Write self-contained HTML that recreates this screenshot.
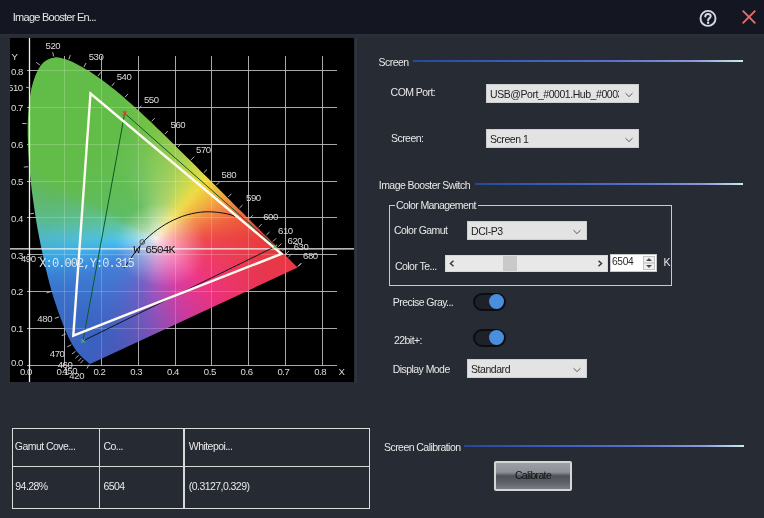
<!DOCTYPE html>
<html><head><meta charset="utf-8">
<style>
*{margin:0;padding:0;box-sizing:border-box}
html,body{width:764px;height:518px;overflow:hidden;will-change:transform;background:#272b34;font-family:"Liberation Sans",sans-serif;color:#e6e6e6}
.a{position:absolute;white-space:nowrap}
#title{position:absolute;left:0;top:0;width:764px;height:34px;background:#141722}
#strip{position:absolute;left:0;top:34px;width:764px;height:3px;background:#2a2e38}
#chart{position:absolute;left:10px;top:38px;width:344px;height:344px;background:#000;overflow:hidden}
.fill{position:absolute;left:0;top:0;width:344px;height:344px}
.fill div{position:absolute}
#chart svg{position:absolute;left:0;top:0}
.lbl{font-size:10.5px;line-height:12px;letter-spacing:-0.55px;color:#e8e8e8}
.hdr{font-size:10.5px;line-height:12px;letter-spacing:-0.55px;color:#e8e8e8}
.hline{position:absolute;height:2px;background:linear-gradient(90deg,#26489a 0%,#3a5cc0 30%,#5670cc 60%,#8a9ada 85%,#c8ecec 100%)}
.sel{position:absolute;background:#e3e3e3;border:1px solid #cfcfcf;color:#222;font-size:10.5px;line-height:12px;letter-spacing:-0.45px;overflow:hidden}
.sel span{position:absolute;left:3px;top:2.5px;white-space:nowrap}
.chev{position:absolute;width:10px;height:6px}
.grp{position:absolute;border:1px solid #c9c9c9}
.tog{position:absolute;width:33px;height:18px;border-radius:9px;background:#1e2128;border:2px solid #0b0d12}
.tog i{position:absolute;left:14px;top:-0.5px;width:15px;height:15px;border-radius:8px;background:#4a8ede}
table{position:absolute;border-collapse:collapse}
</style></head><body>
<div id="title">
 <div class="a" style="left:12.8px;top:10.9px;font-size:11px;line-height:12px;color:#e6e6e6;letter-spacing:-0.75px">Image Booster En...</div>
 <svg class="a" style="left:698px;top:9px" width="20" height="20" viewBox="0 0 20 20"><circle cx="10" cy="9.4" r="7.5" fill="none" stroke="#d2d9e6" stroke-width="1.9"/><path d="M7.3 7.5C7.3 5.8 8.6 5 10 5C11.6 5 12.7 6 12.7 7.3C12.7 9.1 10.1 9.2 10.1 11.3" fill="none" stroke="#d2d9e6" stroke-width="2" stroke-linecap="round"/><circle cx="10.1" cy="13.7" r="1.2" fill="#d2d9e6"/></svg>
 <svg class="a" style="left:741px;top:9px" width="16" height="16" viewBox="0 0 16 16"><path d="M1.7 1.7L14.3 14.3M14.3 1.7L1.7 14.3" stroke="#e86a6a" stroke-width="1.9"/></svg>
</div>
<div id="strip"></div>
<div class="a" style="left:355px;top:38px;width:1.5px;height:345px;background:#30343e"></div>
<div id="chart">
<svg width="344" height="344" viewBox="10 38 344 344"><path d="M64.5 56.0V366.0M101.5 56.0V366.0M138.5 56.0V366.0M175.5 56.0V366.0M211.5 56.0V366.0M248.5 56.0V366.0M285.5 56.0V366.0M322.5 56.0V366.0M27.0 365.5H337.0M27.0 328.5H337.0M27.0 291.5H337.0M27.0 254.5H337.0M27.0 217.5H337.0M27.0 181.5H337.0M27.0 144.5H337.0M27.0 107.5H337.0M27.0 70.5H337.0" stroke="#939393" stroke-width="1" fill="none"/></svg>
<div class="fill" style="clip-path:polygon(80.6px 325.8px,80.6px 325.8px,80.6px 325.8px,80.6px 325.7px,80.6px 325.8px,80.5px 325.8px,80.5px 325.8px,80.5px 325.8px,80.5px 325.8px,80.5px 325.8px,80.4px 325.8px,80.4px 325.8px,80.4px 325.8px,80.4px 325.8px,80.4px 325.8px,80.3px 325.8px,80.3px 325.8px,80.3px 325.8px,80.2px 325.8px,80.2px 325.8px,80.2px 325.8px,80.2px 325.8px,80.1px 325.8px,80.1px 325.8px,80.0px 325.8px,80.0px 325.8px,80.0px 325.8px,79.9px 325.8px,79.9px 325.8px,79.8px 325.8px,79.7px 325.8px,79.7px 325.8px,79.6px 325.7px,79.5px 325.7px,79.4px 325.6px,79.3px 325.5px,79.2px 325.5px,79.1px 325.4px,79.0px 325.3px,78.8px 325.2px,78.7px 325.1px,78.5px 324.9px,78.3px 324.8px,78.1px 324.6px,77.9px 324.4px,77.7px 324.2px,77.5px 324.0px,77.3px 323.8px,77.0px 323.6px,76.7px 323.3px,76.4px 323.1px,76.1px 322.8px,75.8px 322.5px,75.4px 322.2px,75.0px 321.8px,74.6px 321.5px,74.1px 321.1px,73.7px 320.6px,73.2px 320.2px,72.6px 319.7px,72.1px 319.2px,71.5px 318.6px,70.8px 318.0px,70.2px 317.4px,69.5px 316.6px,68.8px 315.8px,68.0px 315.0px,67.2px 314.0px,66.3px 312.9px,65.4px 311.5px,64.4px 310.0px,63.3px 308.3px,62.1px 306.2px,60.9px 304.0px,59.6px 301.5px,58.2px 298.7px,56.8px 295.5px,55.2px 291.9px,53.6px 287.9px,51.9px 283.5px,50.0px 278.6px,48.0px 273.1px,46.0px 267.1px,43.8px 260.6px,41.7px 253.4px,39.5px 245.6px,37.4px 237.2px,35.2px 228.1px,33.1px 218.6px,31.0px 208.4px,28.8px 197.6px,26.8px 186.4px,25.0px 175.1px,23.3px 163.6px,21.7px 151.9px,20.4px 140.1px,19.3px 128.7px,18.5px 117.5px,18.0px 106.5px,17.7px 95.8px,17.7px 85.7px,18.2px 76.0px,18.9px 66.8px,20.0px 58.2px,21.4px 50.4px,23.3px 43.5px,25.5px 37.3px,28.0px 31.9px,30.7px 27.6px,33.6px 24.3px,36.9px 21.9px,40.3px 20.4px,43.7px 19.5px,47.3px 19.3px,51.0px 19.9px,54.7px 21.0px,58.5px 22.3px,62.2px 23.8px,66.0px 25.7px,69.7px 27.7px,73.4px 29.8px,77.0px 31.9px,80.6px 34.1px,84.1px 36.4px,87.5px 38.8px,91.0px 41.2px,94.4px 43.7px,97.7px 46.3px,101.1px 48.9px,104.4px 51.6px,107.8px 54.3px,111.1px 57.1px,114.5px 60.0px,117.8px 62.9px,121.1px 65.8px,124.4px 68.8px,127.7px 71.8px,131.0px 74.8px,134.3px 77.9px,137.6px 81.0px,140.9px 84.1px,144.2px 87.3px,147.5px 90.5px,150.8px 93.6px,154.1px 96.8px,157.4px 100.1px,160.7px 103.3px,164.0px 106.5px,167.2px 109.7px,170.5px 113.0px,173.8px 116.2px,177.1px 119.4px,180.3px 122.6px,183.5px 125.8px,186.8px 129.0px,189.9px 132.2px,193.1px 135.4px,196.3px 138.5px,199.4px 141.6px,202.5px 144.7px,205.6px 147.8px,208.6px 150.8px,211.6px 153.8px,214.6px 156.8px,217.5px 159.7px,220.4px 162.6px,223.2px 165.4px,226.0px 168.2px,228.7px 170.9px,231.4px 173.5px,234.0px 176.1px,236.5px 178.7px,239.0px 181.1px,241.3px 183.4px,243.6px 185.7px,245.7px 187.9px,247.9px 190.0px,249.9px 192.0px,251.9px 194.0px,253.8px 195.9px,255.7px 197.8px,257.4px 199.5px,259.1px 201.1px,260.7px 202.7px,262.2px 204.2px,263.6px 205.6px,265.0px 207.0px,266.2px 208.3px,267.5px 209.5px,268.6px 210.6px,269.7px 211.7px,270.7px 212.7px,271.7px 213.7px,272.6px 214.6px,273.4px 215.4px,274.3px 216.2px,275.0px 217.0px,275.8px 217.7px,276.4px 218.4px,277.1px 219.1px,277.7px 219.7px,278.3px 220.3px,278.9px 220.9px,279.5px 221.4px,280.0px 222.0px,280.5px 222.5px,281.0px 222.9px,281.4px 223.4px,281.8px 223.8px,282.2px 224.2px,282.6px 224.6px,283.0px 224.9px,283.3px 225.2px,283.6px 225.6px,283.9px 225.8px,284.2px 226.1px,284.4px 226.4px,284.6px 226.6px,284.9px 226.8px,285.1px 227.0px,285.3px 227.2px,285.4px 227.4px,285.6px 227.5px,285.8px 227.7px,285.9px 227.8px,286.0px 228.0px,286.1px 228.1px,286.2px 228.2px,286.3px 228.2px,286.4px 228.3px,286.5px 228.4px,286.6px 228.5px,286.6px 228.6px,286.7px 228.6px,286.8px 228.7px,286.8px 228.8px,286.9px 228.8px,287.0px 228.9px,287.0px 229.0px,287.1px 229.0px,287.1px 229.1px,287.2px 229.2px,287.3px 229.2px,287.3px 229.3px,287.4px 229.3px,287.4px 229.4px,287.4px 229.4px,287.5px 229.4px,287.5px 229.5px,287.5px 229.5px,287.6px 229.5px,287.6px 229.5px,287.6px 229.5px,287.6px 229.5px,287.6px 229.6px,287.6px 229.6px,287.6px 229.6px)">
<div style="left:44px;top:18px;width:7px;height:2px;background:linear-gradient(90deg,#62bc48 0px,#62bc48 6px,#62bc48 7px)"></div>
<div style="left:35px;top:20px;width:23px;height:2px;background:linear-gradient(90deg,#62bc48 0px,#62bc48 6px,#62bc48 12px,#62bc48 18px,#62bc48 23px)"></div>
<div style="left:32px;top:22px;width:32px;height:2px;background:linear-gradient(90deg,#62bc48 0px,#62bc48 6px,#62bc48 12px,#62bc48 18px,#62bc48 24px,#62bc48 30px,#62bc48 32px)"></div>
<div style="left:29px;top:24px;width:39px;height:2px;background:linear-gradient(90deg,#62bc48 0px,#62bc48 6px,#62bc48 12px,#62bc48 18px,#62bc48 24px,#62bc48 30px,#62bc48 36px,#62bc48 39px)"></div>
<div style="left:28px;top:26px;width:44px;height:2px;background:linear-gradient(90deg,#62bc48 0px,#62bc48 6px,#62bc48 12px,#62bc48 18px,#62bc48 24px,#62bc48 30px,#62bc48 36px,#62bc48 42px,#62bc48 44px)"></div>
<div style="left:26px;top:28px;width:49px;height:2px;background:linear-gradient(90deg,#62bc48 0px,#62bc48 6px,#62bc48 12px,#62bc48 18px,#62bc48 24px,#62bc48 30px,#62bc48 36px,#62bc48 42px,#62bc48 48px,#62bc48 49px)"></div>
<div style="left:25px;top:30px;width:54px;height:2px;background:linear-gradient(90deg,#62bc48 0px,#62bc48 6px,#62bc48 12px,#62bc48 18px,#62bc48 24px,#62bc48 30px,#62bc48 36px,#62bc48 42px,#62bc48 48px,#62bc48 54px)"></div>
<div style="left:24px;top:32px;width:58px;height:2px;background:linear-gradient(90deg,#62bc48 0px,#62bc48 6px,#62bc48 12px,#62bc48 18px,#62bc48 24px,#62bc48 30px,#62bc48 36px,#62bc48 42px,#62bc48 48px,#62bc48 54px,#62bc48 58px)"></div>
<div style="left:23px;top:34px;width:62px;height:2px;background:linear-gradient(90deg,#62bc48 0px,#62bc48 6px,#62bc48 12px,#62bc48 18px,#62bc48 24px,#62bc48 30px,#62bc48 36px,#62bc48 42px,#62bc48 48px,#62bc48 54px,#62bc48 60px,#62bc48 62px)"></div>
<div style="left:22px;top:36px;width:66px;height:2px;background:linear-gradient(90deg,#62bc48 0px,#62bc48 6px,#62bc48 12px,#62bc48 18px,#62bc48 24px,#62bc48 30px,#62bc48 36px,#62bc48 42px,#62bc48 48px,#62bc48 54px,#62bc48 60px,#62bc48 66px)"></div>
<div style="left:21px;top:38px;width:70px;height:2px;background:linear-gradient(90deg,#62bc48 0px,#62bc48 6px,#62bc48 12px,#62bc48 18px,#62bc48 24px,#62bc48 30px,#62bc48 36px,#62bc48 42px,#62bc48 48px,#62bc48 54px,#62bc48 60px,#62bc48 66px,#62bc48 70px)"></div>
<div style="left:21px;top:40px;width:73px;height:2px;background:linear-gradient(90deg,#62bc48 0px,#62bc48 6px,#62bc48 12px,#62bc48 18px,#62bc48 24px,#62bc48 30px,#62bc48 36px,#62bc48 42px,#62bc48 48px,#62bc48 54px,#62bc48 60px,#62bc48 66px,#62bc48 72px,#62bc48 73px)"></div>
<div style="left:20px;top:42px;width:77px;height:2px;background:linear-gradient(90deg,#62bc48 0px,#62bc48 6px,#62bc48 12px,#62bc48 18px,#62bc48 24px,#62bc48 30px,#62bc48 36px,#62bc48 42px,#62bc48 48px,#62bc48 54px,#62bc48 60px,#62bc48 66px,#62bc48 72px,#62bc48 77px)"></div>
<div style="left:19px;top:44px;width:81px;height:2px;background:linear-gradient(90deg,#62bc48 0px,#62bc48 6px,#62bc48 12px,#62bc48 18px,#62bc48 24px,#62bc48 30px,#62bc48 36px,#62bc48 42px,#62bc48 48px,#62bc48 54px,#62bc48 60px,#62bc48 66px,#62bc48 72px,#62bc48 78px,#62bc48 81px)"></div>
<div style="left:19px;top:46px;width:83px;height:2px;background:linear-gradient(90deg,#62bc48 0px,#62bc48 6px,#62bc48 12px,#62bc48 18px,#62bc48 24px,#62bc48 30px,#62bc48 36px,#62bc48 42px,#62bc48 48px,#62bc48 54px,#62bc48 60px,#62bc48 66px,#62bc48 72px,#62bc48 78px,#62bc48 83px)"></div>
<div style="left:18px;top:48px;width:87px;height:2px;background:linear-gradient(90deg,#62bc48 0px,#62bc48 6px,#62bc48 12px,#62bc48 18px,#62bc48 24px,#62bc48 30px,#62bc48 36px,#62bc48 42px,#62bc48 48px,#62bc48 54px,#62bc48 60px,#62bc48 66px,#62bc48 72px,#62bc48 78px,#62bc48 84px,#62bc48 87px)"></div>
<div style="left:18px;top:50px;width:89px;height:2px;background:linear-gradient(90deg,#62bc48 0px,#62bc48 6px,#62bc48 12px,#62bc48 18px,#62bc48 24px,#62bc48 30px,#62bc48 36px,#62bc48 42px,#62bc48 48px,#62bc48 54px,#62bc48 60px,#62bc48 66px,#62bc48 72px,#62bc48 78px,#62bc48 84px,#62bc48 89px)"></div>
<div style="left:17px;top:52px;width:93px;height:2px;background:linear-gradient(90deg,#62bc48 0px,#62bc48 6px,#62bc48 12px,#62bc48 18px,#62bc48 24px,#62bc48 30px,#62bc48 36px,#62bc48 42px,#62bc48 48px,#62bc48 54px,#62bc48 60px,#62bc48 66px,#62bc48 72px,#62bc48 78px,#62bc48 84px,#62bc48 90px,#64bd48 93px)"></div>
<div style="left:17px;top:54px;width:95px;height:2px;background:linear-gradient(90deg,#62bc48 0px,#62bc48 6px,#62bc48 12px,#62bc48 18px,#62bc48 24px,#62bc48 30px,#62bc48 36px,#62bc48 42px,#62bc48 48px,#62bc48 54px,#62bc48 60px,#62bc48 66px,#62bc48 72px,#62bc48 78px,#62bc48 84px,#62bc48 90px,#65bd48 95px)"></div>
<div style="left:17px;top:56px;width:97px;height:2px;background:linear-gradient(90deg,#62bc48 0px,#62bc48 6px,#62bc48 12px,#62bc48 18px,#62bc48 24px,#62bc48 30px,#62bc48 36px,#62bc48 42px,#62bc48 48px,#62bc48 54px,#62bc48 60px,#62bc48 66px,#62bc48 72px,#62bc48 78px,#62bc48 84px,#62bc48 90px,#65bd48 96px,#66bd48 97px)"></div>
<div style="left:16px;top:58px;width:101px;height:2px;background:linear-gradient(90deg,#62bc48 0px,#62bc48 6px,#62bc48 12px,#62bc48 18px,#62bc48 24px,#62bc48 30px,#62bc48 36px,#62bc48 42px,#62bc48 48px,#62bc48 54px,#62bc48 60px,#62bc48 66px,#62bc48 72px,#62bc48 78px,#62bc48 84px,#62bc48 90px,#64bd48 96px,#68be48 101px)"></div>
<div style="left:16px;top:60px;width:103px;height:2px;background:linear-gradient(90deg,#62bc48 0px,#62bc48 6px,#62bc48 12px,#62bc48 18px,#62bc48 24px,#62bc48 30px,#62bc48 36px,#62bc48 42px,#62bc48 48px,#62bc48 54px,#62bc48 60px,#62bc48 66px,#62bc48 72px,#62bc48 78px,#62bc48 84px,#62bc48 90px,#64bd48 96px,#68be48 102px,#69be47 103px)"></div>
<div style="left:16px;top:62px;width:105px;height:2px;background:linear-gradient(90deg,#62bc48 0px,#62bc48 6px,#62bc48 12px,#62bc48 18px,#62bc48 24px,#62bc48 30px,#62bc48 36px,#62bc48 42px,#62bc48 48px,#62bc48 54px,#62bc48 60px,#62bc48 66px,#62bc48 72px,#62bc48 78px,#62bc48 84px,#62bc48 90px,#64bd48 96px,#68be48 102px,#6abe47 105px)"></div>
<div style="left:16px;top:64px;width:108px;height:2px;background:linear-gradient(90deg,#62bc48 0px,#62bc48 6px,#62bc48 12px,#62bc48 18px,#62bc48 24px,#62bc48 30px,#62bc48 36px,#62bc48 42px,#62bc48 48px,#62bc48 54px,#62bc48 60px,#62bc48 66px,#62bc48 72px,#62bc48 78px,#62bc48 84px,#62bc48 90px,#63bc48 96px,#67be48 102px,#6cbf47 108px)"></div>
<div style="left:15px;top:66px;width:111px;height:2px;background:linear-gradient(90deg,#62bc48 0px,#62bc48 6px,#62bc48 12px,#62bc48 18px,#62bc48 24px,#62bc48 30px,#62bc48 36px,#62bc48 42px,#62bc48 48px,#62bc48 54px,#62bc48 60px,#62bc48 66px,#62bc48 72px,#62bc48 78px,#62bc48 84px,#62bc48 90px,#62bc48 96px,#66bd48 102px,#6bbf47 108px,#6dbf47 111px)"></div>
<div style="left:15px;top:68px;width:113px;height:2px;background:linear-gradient(90deg,#62bc48 0px,#62bc48 6px,#62bc48 12px,#62bc48 18px,#62bc48 24px,#62bc48 30px,#62bc48 36px,#62bc48 42px,#62bc48 48px,#62bc48 54px,#62bc48 60px,#62bc48 66px,#62bc48 72px,#62bc48 78px,#62bc48 84px,#62bc48 90px,#62bc48 96px,#66bd48 102px,#6bbf47 108px,#6ec047 113px)"></div>
<div style="left:15px;top:70px;width:115px;height:2px;background:linear-gradient(90deg,#62bc48 0px,#62bc48 6px,#62bc48 12px,#62bc48 18px,#62bc48 24px,#62bc48 30px,#62bc48 36px,#62bc48 42px,#62bc48 48px,#62bc48 54px,#62bc48 60px,#62bc48 66px,#62bc48 72px,#62bc48 78px,#62bc48 84px,#62bc48 90px,#62bc48 96px,#66bd48 102px,#6abf47 108px,#6fc047 114px,#70c047 115px)"></div>
<div style="left:15px;top:72px;width:117px;height:2px;background:linear-gradient(90deg,#62bc48 0px,#62bc48 6px,#62bc48 12px,#62bc48 18px,#62bc48 24px,#62bc48 30px,#62bc48 36px,#62bc48 42px,#62bc48 48px,#62bc48 54px,#62bc48 60px,#62bc48 66px,#62bc48 72px,#62bc48 78px,#62bc48 84px,#62bc48 90px,#62bc48 96px,#65bd48 102px,#6abe47 108px,#6fc047 114px,#71c147 117px)"></div>
<div style="left:15px;top:74px;width:120px;height:2px;background:linear-gradient(90deg,#62bc48 0px,#62bc48 6px,#62bc48 12px,#62bc48 18px,#62bc48 24px,#62bc48 30px,#62bc48 36px,#62bc48 42px,#62bc48 48px,#62bc48 54px,#62bc48 60px,#62bc48 66px,#62bc48 72px,#62bc48 78px,#62bc48 84px,#62bc48 90px,#62bc48 96px,#65bd48 102px,#6abe47 108px,#6ec047 114px,#73c147 120px)"></div>
<div style="left:15px;top:76px;width:122px;height:2px;background:linear-gradient(90deg,#62bc48 0px,#62bc48 6px,#62bc48 12px,#62bc48 18px,#62bc48 24px,#62bc48 30px,#62bc48 36px,#62bc48 42px,#62bc48 48px,#62bc48 54px,#62bc48 60px,#62bc48 66px,#62bc48 72px,#62bc48 78px,#62bc48 84px,#62bc48 90px,#62bc48 96px,#65bd48 102px,#69be47 108px,#6ec047 114px,#73c147 120px,#75c247 122px)"></div>
<div style="left:15px;top:78px;width:124px;height:2px;background:linear-gradient(90deg,#62bc48 0px,#62bc48 6px,#62bc48 12px,#62bc48 18px,#62bc48 24px,#62bc48 30px,#62bc48 36px,#62bc48 42px,#62bc48 48px,#62bc48 54px,#62bc48 60px,#62bc48 66px,#62bc48 72px,#62bc48 78px,#62bc48 84px,#62bc48 90px,#62bc48 96px,#64bd48 102px,#69be47 108px,#6ec047 114px,#73c147 120px,#76c246 124px)"></div>
<div style="left:14px;top:80px;width:127px;height:2px;background:linear-gradient(90deg,#62bc48 0px,#62bc48 6px,#62bc48 12px,#62bc48 18px,#62bc48 24px,#62bc48 30px,#62bc48 36px,#62bc48 42px,#62bc48 48px,#62bc48 54px,#62bc48 60px,#62bc48 66px,#62bc48 72px,#62bc48 78px,#62bc48 84px,#62bc48 90px,#62bc48 96px,#63bc48 102px,#68be48 108px,#6dbf47 114px,#72c147 120px,#77c246 126px,#78c346 127px)"></div>
<div style="left:14px;top:82px;width:129px;height:2px;background:linear-gradient(90deg,#62bc48 0px,#62bc48 6px,#62bc48 12px,#62bc48 18px,#62bc48 24px,#62bc48 30px,#62bc48 36px,#62bc48 42px,#62bc48 48px,#62bc48 54px,#62bc48 60px,#62bc48 66px,#62bc48 72px,#62bc48 78px,#62bc48 84px,#62bc48 90px,#62bc48 96px,#63bc48 102px,#68be48 108px,#6dbf47 114px,#72c147 120px,#77c246 126px,#79c346 129px)"></div>
<div style="left:14px;top:84px;width:131px;height:2px;background:linear-gradient(90deg,#62bc48 0px,#62bc48 6px,#62bc48 12px,#62bc48 18px,#62bc48 24px,#62bc48 30px,#62bc48 36px,#62bc48 42px,#62bc48 48px,#62bc48 54px,#62bc48 60px,#62bc48 66px,#62bc48 72px,#62bc48 78px,#62bc48 84px,#62bc48 90px,#62bc48 96px,#62bc48 102px,#67be48 108px,#6cbf47 114px,#71c147 120px,#77c246 126px,#7bc446 131px)"></div>
<div style="left:14px;top:86px;width:133px;height:2px;background:linear-gradient(90deg,#62bc48 0px,#62bc48 6px,#62bc48 12px,#62bc48 18px,#62bc48 24px,#62bc48 30px,#62bc48 36px,#62bc48 42px,#62bc48 48px,#62bc48 54px,#62bc48 60px,#62bc48 66px,#62bc48 72px,#62bc48 78px,#62bc48 84px,#62bc48 90px,#62bc48 96px,#62bc48 102px,#67be48 108px,#6cbf47 114px,#71c147 120px,#76c246 126px,#7cc446 132px,#7dc446 133px)"></div>
<div style="left:14px;top:88px;width:135px;height:2px;background:linear-gradient(90deg,#62bc48 0px,#62bc48 6px,#62bc48 12px,#62bc48 18px,#62bc48 24px,#62bc48 30px,#62bc48 36px,#62bc48 42px,#62bc48 48px,#62bc48 54px,#62bc48 60px,#62bc48 66px,#62bc48 72px,#62bc48 78px,#62bc48 84px,#62bc48 90px,#62bc48 96px,#62bc48 102px,#67bd48 108px,#6cbf47 114px,#71c147 120px,#76c246 126px,#7cc446 132px,#7fc445 135px)"></div>
<div style="left:14px;top:90px;width:138px;height:2px;background:linear-gradient(90deg,#62bc48 0px,#62bc48 6px,#62bc48 12px,#62bc48 18px,#62bc48 24px,#62bc48 30px,#62bc48 36px,#62bc48 42px,#62bc48 48px,#62bc48 54px,#62bc48 60px,#62bc48 66px,#62bc48 72px,#62bc48 78px,#62bc48 84px,#62bc48 90px,#62bc48 96px,#62bc48 102px,#66bd48 108px,#6cbf47 114px,#71c147 120px,#77c247 126px,#7cc447 132px,#82c546 138px)"></div>
<div style="left:14px;top:92px;width:140px;height:2px;background:linear-gradient(90deg,#62bc48 0px,#62bc48 6px,#62bc48 12px,#62bc48 18px,#62bc48 24px,#62bc48 30px,#62bc48 36px,#62bc48 42px,#62bc48 48px,#62bc48 54px,#62bc48 60px,#62bc48 66px,#62bc48 72px,#62bc48 78px,#62bc48 84px,#62bc48 90px,#62bc48 96px,#62bc48 102px,#66bd48 108px,#6cbf48 114px,#72c148 120px,#77c348 126px,#7dc448 132px,#83c547 138px,#85c646 140px)"></div>
<div style="left:14px;top:94px;width:142px;height:2px;background:linear-gradient(90deg,#62bc48 0px,#62bc48 6px,#62bc48 12px,#62bc48 18px,#62bc48 24px,#62bc48 30px,#62bc48 36px,#62bc48 42px,#62bc48 48px,#62bc48 54px,#62bc48 60px,#62bc48 66px,#62bc48 72px,#62bc48 78px,#62bc48 84px,#62bc48 90px,#62bc48 96px,#62bc49 102px,#66bd49 108px,#6cbf49 114px,#72c149 120px,#78c349 126px,#7ec549 132px,#84c648 138px,#88c647 142px)"></div>
<div style="left:14px;top:96px;width:144px;height:2px;background:linear-gradient(90deg,#62bc48 0px,#62bc48 6px,#62bc48 12px,#62bc48 18px,#62bc48 24px,#62bc48 30px,#62bc48 36px,#62bc48 42px,#62bc48 48px,#62bc48 54px,#62bc48 60px,#62bc48 66px,#62bc48 72px,#62bc48 78px,#62bc48 84px,#62bc48 90px,#62bc49 96px,#63bc4a 102px,#67be4a 108px,#6dbf4a 114px,#73c14a 120px,#78c34a 126px,#7ec54a 132px,#84c649 138px,#8ac747 144px)"></div>
<div style="left:14px;top:98px;width:146px;height:2px;background:linear-gradient(90deg,#62bc48 0px,#62bc48 6px,#62bc48 12px,#62bc48 18px,#62bc48 24px,#62bc48 30px,#62bc48 36px,#62bc48 42px,#62bc48 48px,#62bc48 54px,#62bc48 60px,#62bc48 66px,#62bc48 72px,#62bc48 78px,#62bc48 84px,#62bc48 90px,#63bc49 96px,#64bd4a 102px,#67be4b 108px,#6dc04b 114px,#73c24b 120px,#79c34b 126px,#7fc54b 132px,#85c64a 138px,#8bc748 144px,#8dc748 146px)"></div>
<div style="left:14px;top:100px;width:148px;height:2px;background:linear-gradient(90deg,#62bc48 0px,#62bc48 6px,#62bc48 12px,#62bc48 18px,#62bc48 24px,#62bc48 30px,#62bc48 36px,#62bc48 42px,#62bc48 48px,#62bc48 54px,#62bc48 60px,#62bc48 66px,#62bc48 72px,#62bc48 78px,#62bc48 84px,#62bc49 90px,#63bc4a 96px,#64bd4b 102px,#67be4c 108px,#6dc04c 114px,#73c24c 120px,#7ac44c 126px,#80c64c 132px,#86c74b 138px,#8cc749 144px,#90c848 148px)"></div>
<div style="left:14px;top:102px;width:150px;height:2px;background:linear-gradient(90deg,#62bc48 0px,#62bc48 6px,#62bc48 12px,#62bc48 18px,#62bc48 24px,#62bc48 30px,#62bc48 36px,#62bc48 42px,#62bc48 48px,#62bc48 54px,#62bc48 60px,#62bc48 66px,#62bc48 72px,#62bc48 78px,#62bc49 84px,#63bc4a 90px,#64bd4b 96px,#64bd4c 102px,#67be4d 108px,#6dc04d 114px,#74c24e 120px,#7ac44d 126px,#80c64d 132px,#87c74c 138px,#8dc84a 144px,#93c949 150px)"></div>
<div style="left:14px;top:104px;width:152px;height:2px;background:linear-gradient(90deg,#62bc48 0px,#62bc48 6px,#62bc48 12px,#62bc48 18px,#62bc48 24px,#62bc48 30px,#62bc48 36px,#62bc48 42px,#62bc48 48px,#62bc48 54px,#62bc48 60px,#62bc48 66px,#62bc48 72px,#62bc48 78px,#62bc49 84px,#63bc4a 90px,#64bd4c 96px,#65bd4d 102px,#67be4e 108px,#6ec04e 114px,#74c24f 120px,#7bc44e 126px,#81c64e 132px,#88c74d 138px,#8ec84b 144px,#94c94a 150px,#96c949 152px)"></div>
<div style="left:14px;top:106px;width:154px;height:2px;background:linear-gradient(90deg,#62bc48 0px,#62bc48 6px,#62bc48 12px,#62bc48 18px,#62bc48 24px,#62bc48 30px,#62bc48 36px,#62bc48 42px,#62bc48 48px,#62bc48 54px,#62bc48 60px,#62bc48 66px,#62bc48 72px,#62bc49 78px,#62bc4a 84px,#63bd4b 90px,#64bd4c 96px,#65bd4e 102px,#67be4f 108px,#6ec04f 114px,#75c250 120px,#7bc44f 126px,#82c74f 132px,#88c84e 138px,#8fc84d 144px,#95c94b 150px,#99ca4a 154px)"></div>
<div style="left:15px;top:108px;width:155px;height:2px;background:linear-gradient(90deg,#62bc48 0px,#62bc48 6px,#62bc48 12px,#62bc48 18px,#62bc48 24px,#62bc48 30px,#62bc48 36px,#62bc48 42px,#62bc48 48px,#62bc48 54px,#62bc48 60px,#62bc48 66px,#62bc49 72px,#62bc49 78px,#63bc4a 84px,#63bd4c 90px,#65bd4d 96px,#66be4f 102px,#69be50 108px,#6fc150 114px,#76c351 120px,#7dc550 126px,#84c750 132px,#8ac84f 138px,#91c94d 144px,#97ca4c 150px,#9cca4a 155px)"></div>
<div style="left:15px;top:110px;width:157px;height:2px;background:linear-gradient(90deg,#62bc48 0px,#62bc48 6px,#62bc48 12px,#62bc48 18px,#62bc48 24px,#62bc48 30px,#62bc48 36px,#62bc48 42px,#62bc48 48px,#62bc48 54px,#62bc48 60px,#62bc48 66px,#62bc49 72px,#62bc4a 78px,#63bc4b 84px,#64bd4c 90px,#65bd4e 96px,#66be4f 102px,#69be51 108px,#70c151 114px,#76c352 120px,#7dc551 126px,#84c751 132px,#8bc850 138px,#92c94e 144px,#98ca4d 150px,#9fcb4a 156px,#a1cc4a 157px)"></div>
<div style="left:15px;top:112px;width:159px;height:2px;background:linear-gradient(90deg,#62bc48 0px,#62bc48 6px,#62bc48 12px,#62bc48 18px,#62bc48 24px,#62bc48 30px,#62bc48 36px,#62bc48 42px,#62bc48 48px,#62bc48 54px,#62bc48 60px,#62bc49 66px,#62bc49 72px,#62bc4a 78px,#63bc4b 84px,#64bd4d 90px,#65bd4e 96px,#67be50 102px,#69bf52 108px,#70c152 114px,#77c353 120px,#7ec553 126px,#85c852 132px,#8cc951 138px,#93ca4f 144px,#99ca4e 150px,#a0cc4b 156px,#a6cd49 159px)"></div>
<div style="left:15px;top:114px;width:161px;height:2px;background:linear-gradient(90deg,#62bc48 0px,#62bc48 6px,#62bc48 12px,#62bc48 18px,#62bc48 24px,#62bc48 30px,#62bc48 36px,#62bc48 42px,#62bc48 48px,#62bc48 54px,#62bc48 60px,#62bc49 66px,#62bc4a 72px,#62bc4b 78px,#63bc4c 84px,#64bd4d 90px,#65bd4f 96px,#67be51 102px,#69bf53 108px,#70c153 114px,#77c354 120px,#7ec654 126px,#86c853 132px,#8dc952 138px,#94ca50 144px,#9acb4f 150px,#a2cc4c 156px,#abcf49 161px)"></div>
<div style="left:15px;top:116px;width:163px;height:2px;background:linear-gradient(90deg,#62bc48 0px,#62bc48 6px,#62bc48 12px,#62bc48 18px,#62bc48 24px,#62bc48 30px,#62bc48 36px,#62bc48 42px,#62bc48 48px,#62bc48 54px,#62bc48 60px,#62bc4a 66px,#62bc4a 72px,#62bc4b 78px,#62bc4c 84px,#64bd4d 90px,#65bd4f 96px,#67be52 102px,#6abf54 108px,#70c154 114px,#78c455 120px,#7fc655 126px,#86c854 132px,#8ec953 138px,#95ca51 144px,#9bcb50 150px,#a4cd4d 156px,#aed049 162px,#b0d048 163px)"></div>
<div style="left:15px;top:118px;width:165px;height:2px;background:linear-gradient(90deg,#62bc48 0px,#62bc48 6px,#62bc48 12px,#62bc48 18px,#62bc48 24px,#62bc48 30px,#62bc48 36px,#62bc48 42px,#62bc48 48px,#62bc48 54px,#62bc49 60px,#62bc4a 66px,#62bc4b 72px,#62bc4c 78px,#62bc4c 84px,#64bd4e 90px,#65be50 96px,#68be52 102px,#6abf55 108px,#70c155 114px,#78c456 120px,#80c656 126px,#87c955 132px,#8fca54 138px,#96cb53 144px,#9dcc51 150px,#a5cd4e 156px,#b0d04a 162px,#b5d248 165px)"></div>
<div style="left:15px;top:120px;width:167px;height:2px;background:linear-gradient(90deg,#62bc48 0px,#62bc48 6px,#62bc48 12px,#62bc48 18px,#62bc48 24px,#62bc48 30px,#62bc48 36px,#62bc48 42px,#62bc48 48px,#62bc48 54px,#62bc49 60px,#62bc4b 66px,#62bc4b 72px,#62bc4c 78px,#62bc4d 84px,#64bd4e 90px,#65be50 96px,#68be53 102px,#6abf55 108px,#70c156 114px,#78c457 120px,#80c657 126px,#88c956 132px,#8fca55 138px,#97cb54 144px,#9ecc52 150px,#a7ce4f 156px,#b2d14a 162px,#bad347 167px)"></div>
<div style="left:15px;top:122px;width:169px;height:2px;background:linear-gradient(90deg,#62bc48 0px,#62bc48 6px,#62bc48 12px,#62bc48 18px,#62bc48 24px,#62bc48 30px,#62bc48 36px,#62bc48 42px,#62bc48 48px,#62bc49 54px,#62bc4a 60px,#62bc4b 66px,#62bc4c 72px,#62bc4d 78px,#62bc4d 84px,#63bd4e 90px,#65be51 96px,#68be53 102px,#6bbf56 108px,#70c157 114px,#78c458 120px,#81c758 126px,#89c957 132px,#90ca56 138px,#98cb55 144px,#9fcc53 150px,#a9cf4f 156px,#b3d24b 162px,#bed447 168px,#bfd546 169px)"></div>
<div style="left:16px;top:124px;width:170px;height:2px;background:linear-gradient(90deg,#62bc48 0px,#62bc48 6px,#62bc48 12px,#62bc48 18px,#62bc48 24px,#62bc48 30px,#62bc48 36px,#62bc48 42px,#62bc48 48px,#62bc49 54px,#62bc4b 60px,#62bc4c 66px,#62bc4d 72px,#62bc4d 78px,#62bd4e 84px,#64bd4f 90px,#66be51 96px,#68bf54 102px,#6bc057 108px,#72c259 114px,#7ac559 120px,#82c759 126px,#8bca58 132px,#92cb57 138px,#9acc55 144px,#a1cd54 150px,#acd04f 156px,#b7d34b 162px,#c1d646 168px,#c5d645 170px)"></div>
<div style="left:16px;top:126px;width:172px;height:2px;background:linear-gradient(90deg,#62bc4a 0px,#62bc48 6px,#62bc48 12px,#62bc48 18px,#62bc48 24px,#62bc48 30px,#62bc48 36px,#62bc48 42px,#62bc48 48px,#62bc4a 54px,#62bc4b 60px,#62bc4c 66px,#62bc4d 72px,#62bc4e 78px,#62bd4e 84px,#63bd4f 90px,#66be52 96px,#68bf55 102px,#6cc058 108px,#72c25a 114px,#7ac55a 120px,#83c85a 126px,#8bca59 132px,#93cb58 138px,#9bcc56 144px,#a3cd55 150px,#aed050 156px,#b9d34b 162px,#c4d647 168px,#cbd744 172px)"></div>
<div style="left:16px;top:128px;width:174px;height:2px;background:linear-gradient(90deg,#62bb4c 0px,#62bc49 6px,#62bc48 12px,#62bc48 18px,#62bc48 24px,#62bc48 30px,#62bc48 36px,#62bc48 42px,#62bc49 48px,#62bc4a 54px,#62bc4c 60px,#62bc4d 66px,#62bc4e 72px,#62bc4e 78px,#62bd4f 84px,#63bd4f 90px,#65be52 96px,#68bf55 102px,#6cc058 108px,#72c25a 114px,#7bc55b 120px,#83c85b 126px,#8cca5a 132px,#94cb59 138px,#9ccd58 144px,#a4ce55 150px,#b0d150 156px,#bbd44c 162px,#c6d747 168px,#d1d842 174px)"></div>
<div style="left:16px;top:130px;width:176px;height:2px;background:linear-gradient(90deg,#62bb4f 0px,#62bc4b 6px,#62bc48 12px,#62bc48 18px,#62bc48 24px,#62bc48 30px,#62bc48 36px,#62bc48 42px,#62bc49 48px,#62bc4b 54px,#62bc4c 60px,#62bc4d 66px,#62bc4e 72px,#62bc4f 78px,#62bd4f 84px,#63bd50 90px,#65be52 96px,#68bf55 102px,#6cc059 108px,#72c25b 114px,#7bc55c 120px,#84c85c 126px,#8dcb5b 132px,#95cc5a 138px,#9dcd59 144px,#a6ce56 150px,#b2d251 156px,#bdd54c 162px,#c8d747 168px,#d4d942 174px,#d7d941 176px)"></div>
<div style="left:16px;top:132px;width:178px;height:2px;background:linear-gradient(90deg,#61bb51 0px,#62bb4d 6px,#62bc49 12px,#62bc48 18px,#62bc48 24px,#62bc48 30px,#62bc48 36px,#62bc48 42px,#62bc4a 48px,#62bc4b 54px,#62bc4d 60px,#62bc4e 66px,#62bc4f 72px,#62bc50 78px,#62bd50 84px,#63bd50 90px,#65be52 96px,#68bf56 102px,#6cc05a 108px,#72c25c 114px,#7bc55d 120px,#84c85d 126px,#8ecb5c 132px,#96cc5b 138px,#9fcd5a 144px,#a8cf57 150px,#b4d252 156px,#c0d54c 162px,#cbd847 168px,#d6d942 174px,#ddda3f 178px)"></div>
<div style="left:16px;top:134px;width:180px;height:2px;background:linear-gradient(90deg,#61bb53 0px,#62bb50 6px,#62bc4c 12px,#62bc48 18px,#62bc48 24px,#62bc48 30px,#62bc48 36px,#62bc48 42px,#62bc4a 48px,#62bc4c 54px,#62bc4d 60px,#62bc4f 66px,#62bc50 72px,#62bc50 78px,#62bd51 84px,#63bd51 90px,#65bd53 96px,#68bf56 102px,#6cc05a 108px,#72c25d 114px,#7bc55e 120px,#85c85e 126px,#8ecb5d 132px,#97cc5c 138px,#a0ce5b 144px,#aad058 150px,#b6d352 156px,#c2d64d 162px,#ced848 168px,#d9da42 174px,#e4db3e 180px)"></div>
<div style="left:17px;top:136px;width:181px;height:2px;background:linear-gradient(90deg,#61ba55 0px,#61bb51 6px,#62bb4e 12px,#62bc49 18px,#62bc48 24px,#62bc48 30px,#62bc48 36px,#62bc49 42px,#62bc4b 48px,#61bc4d 54px,#61bc4e 60px,#61bc4f 66px,#62bc50 72px,#62bd51 78px,#62bd51 84px,#63bd51 90px,#65be53 96px,#69bf57 102px,#6dc05b 108px,#73c25f 114px,#7dc65f 120px,#87c95f 126px,#91cc5e 132px,#9acd5d 138px,#a2ce5c 144px,#aed157 150px,#bad452 156px,#c6d74c 162px,#d2d947 168px,#deda42 174px,#e8db3d 180px,#eadc3c 181px)"></div>
<div style="left:17px;top:138px;width:183px;height:2px;background:linear-gradient(90deg,#61ba57 0px,#61bb54 6px,#62bb50 12px,#62bc4c 18px,#62bc48 24px,#62bc48 30px,#62bc48 36px,#62bc4a 42px,#62bc4c 48px,#61bc4d 54px,#61bc4f 60px,#61bc50 66px,#61bc51 72px,#62bd52 78px,#62bd52 84px,#63bd52 90px,#64bd53 96px,#68bf57 102px,#6dc05c 108px,#73c25f 114px,#7dc660 120px,#87c960 126px,#91cc5f 132px,#9bcd5e 138px,#a4cf5d 144px,#b0d258 150px,#bdd552 156px,#c9d84c 162px,#d5d947 168px,#e1db41 174px,#ebdc3d 180px,#edd83b 183px)"></div>
<div style="left:17px;top:140px;width:185px;height:2px;background:linear-gradient(90deg,#61ba59 0px,#61ba56 6px,#61bb52 12px,#62bb4f 18px,#62bc4a 24px,#62bc48 30px,#62bc48 36px,#62bc4a 42px,#61bc4c 48px,#61bc4e 54px,#61bc4f 60px,#61bc51 66px,#61bc52 72px,#62bd52 78px,#62bd53 84px,#63bd53 90px,#64bd53 96px,#68bf57 102px,#6dc05c 108px,#73c260 114px,#7dc661 120px,#88ca61 126px,#92cc60 132px,#9cce5f 138px,#a5cf5e 144px,#b2d258 150px,#bfd652 156px,#cbd94c 162px,#d8da47 168px,#e4db41 174px,#edda3d 180px,#edd23b 185px)"></div>
<div style="left:17px;top:142px;width:187px;height:2px;background:linear-gradient(90deg,#61ba5c 0px,#61ba58 6px,#61ba55 12px,#61bb51 18px,#62bb4d 24px,#62bc48 30px,#62bc49 36px,#62bc4b 42px,#61bc4d 48px,#61bc4e 54px,#61bc50 60px,#61bc51 66px,#61bc52 72px,#62bd53 78px,#62bd53 84px,#62bd53 90px,#63bd53 96px,#67bf57 102px,#6dc05c 108px,#73c261 114px,#7dc662 120px,#88ca62 126px,#93cd61 132px,#9dce60 138px,#a6d05f 144px,#b4d359 150px,#c1d752 156px,#ced94c 162px,#dbda46 168px,#e7db41 174px,#edd73d 180px,#eece3b 186px,#eecc3b 187px)"></div>
<div style="left:17px;top:144px;width:189px;height:2px;background:linear-gradient(90deg,#61b95e 0px,#61ba5b 6px,#61ba57 12px,#61bb54 18px,#62bb50 24px,#62bc4b 30px,#62bc49 36px,#61bc4b 42px,#61bc4d 48px,#61bc4f 54px,#61bc51 60px,#61bc52 66px,#61bc53 72px,#61bc54 78px,#62bd54 84px,#62bd54 90px,#63bd54 96px,#67be57 102px,#6cc05c 108px,#73c262 114px,#7dc663 120px,#89ca63 126px,#94cd62 132px,#9ecf61 138px,#a8d060 144px,#b6d459 150px,#c4d753 156px,#d1d94c 162px,#deda46 168px,#eadc41 174px,#edd43d 180px,#eecb3b 186px,#eec73a 189px)"></div>
<div style="left:18px;top:146px;width:190px;height:2px;background:linear-gradient(90deg,#60b960 0px,#61b95d 6px,#61ba59 12px,#61ba56 18px,#61bb52 24px,#62bb4d 30px,#62bc4a 36px,#61bc4c 42px,#61bc4e 48px,#61bc50 54px,#61bc52 60px,#61bc53 66px,#61bc54 72px,#61bd55 78px,#62bd55 84px,#62bd55 90px,#63bd54 96px,#67bf58 102px,#6dc15d 108px,#74c363 114px,#7fc764 120px,#8bcb64 126px,#97ce63 132px,#a1cf62 138px,#acd15f 144px,#bbd558 150px,#c9d952 156px,#d7da4b 162px,#e4db45 168px,#edda40 174px,#eed03d 180px,#eec63b 186px,#efc13a 190px)"></div>
<div style="left:18px;top:148px;width:192px;height:2px;background:linear-gradient(90deg,#60b963 0px,#61b95f 6px,#61b95c 12px,#61ba58 18px,#61ba54 24px,#61bb50 30px,#61bc4e 36px,#61bc4d 42px,#61bc4f 48px,#61bc51 54px,#61bc52 60px,#61bc54 66px,#61bc55 72px,#61bc55 78px,#62bd56 84px,#62bd56 90px,#63bd55 96px,#66be58 102px,#6dc05d 108px,#74c364 114px,#7fc765 120px,#8ccb65 126px,#97ce64 132px,#a2d063 138px,#aed260 144px,#bed658 150px,#ccd951 156px,#dada4b 162px,#e7db44 168px,#edd740 174px,#eecd3e 180px,#efc33b 186px,#efbb39 192px)"></div>
<div style="left:18px;top:150px;width:194px;height:2px;background:linear-gradient(90deg,#60b865 0px,#60b962 6px,#61b95f 12px,#61ba5b 18px,#61ba57 24px,#61bb54 30px,#61bb51 36px,#61bc4e 42px,#61bc4f 48px,#61bc51 54px,#61bc53 60px,#61bc54 66px,#61bc55 72px,#61bc56 78px,#61bd57 84px,#62bd56 90px,#63bd56 96px,#65be57 102px,#6cc05d 108px,#74c364 114px,#7fc766 120px,#8ccb66 126px,#98ce65 132px,#a4d064 138px,#b1d360 144px,#c0d758 150px,#cfda51 156px,#dddb4a 162px,#eadc44 168px,#eed440 174px,#eec93e 180px,#efc03b 186px,#f0b839 192px,#f0b539 194px)"></div>
<div style="left:18px;top:152px;width:196px;height:2px;background:linear-gradient(90deg,#60b867 0px,#60b865 6px,#60b961 12px,#61b95e 18px,#61ba5a 24px,#61ba57 30px,#61bb55 36px,#61bc52 42px,#61bc50 48px,#60bc52 54px,#60bc53 60px,#60bc55 66px,#60bc56 72px,#61bc57 78px,#61bd57 84px,#62bd57 90px,#63bd57 96px,#64be57 102px,#6bc05d 108px,#73c364 114px,#7fc767 120px,#8dcc67 126px,#99cf66 132px,#a5d065 138px,#b3d360 144px,#c3d858 150px,#d2da51 156px,#e1db4a 162px,#eedc43 168px,#eed040 174px,#efc63e 180px,#efbd3c 186px,#f0b439 192px,#f0ae39 196px)"></div>
<div style="left:19px;top:154px;width:197px;height:2px;background:linear-gradient(90deg,#60b86a 0px,#60b867 6px,#60b964 12px,#60b960 18px,#61b95d 24px,#61ba5a 30px,#61bb59 36px,#61bc56 42px,#61bc52 48px,#60bc53 54px,#60bc54 60px,#60bc56 66px,#60bc57 72px,#61bc58 78px,#61bd58 84px,#62bd58 90px,#63bd58 96px,#64be57 102px,#6cc05e 108px,#75c366 114px,#82c868 120px,#90cd68 126px,#9ccf67 132px,#a8d166 138px,#b8d55f 144px,#c9d957 150px,#d8db4f 156px,#e7db48 162px,#eed643 168px,#efcb40 174px,#efc13e 180px,#f0b83b 186px,#f0af3a 192px,#f0a73b 197px)"></div>
<div style="left:19px;top:156px;width:199px;height:2px;background:linear-gradient(90deg,#5fb86c 0px,#60b869 6px,#60b866 12px,#60b963 18px,#61b960 24px,#61ba5e 30px,#61bb5d 36px,#61bb5a 42px,#60bc57 48px,#60bc53 54px,#60bc55 60px,#60bc57 66px,#60bc58 72px,#60bc59 78px,#61bd59 84px,#61bd59 90px,#62bd58 96px,#63bd57 102px,#6bc05e 108px,#74c366 114px,#81c869 120px,#90cd69 126px,#9dd068 132px,#aad267 138px,#bbd65f 144px,#ccda57 150px,#dcdb4f 156px,#ebdc47 162px,#eed343 168px,#efc740 174px,#efbe3e 180px,#f0b53b 186px,#f0ab3c 192px,#f0a13c 198px,#f0a03c 199px)"></div>
<div style="left:19px;top:158px;width:201px;height:2px;background:linear-gradient(90deg,#5fb86f 0px,#5fb86c 6px,#60b869 12px,#60b866 18px,#60b963 24px,#60ba62 30px,#61bb61 36px,#60bb5f 42px,#60bc5b 48px,#60bc57 54px,#60bc56 60px,#60bc57 66px,#60bc59 72px,#60bc5a 78px,#60bd5a 84px,#61bd5a 90px,#62bd59 96px,#63bd58 102px,#6ac05d 108px,#74c366 114px,#81c86a 120px,#91cd6a 126px,#9fd06a 132px,#acd268 138px,#bed75f 144px,#cfda56 150px,#e0db4e 156px,#eedc46 162px,#efcf43 168px,#efc440 174px,#f0ba3e 180px,#f0b03c 186px,#f0a63d 192px,#f09d3e 198px,#f0993e 201px)"></div>
<div style="left:19px;top:160px;width:203px;height:2px;background:linear-gradient(90deg,#5fb971 0px,#5fb86f 6px,#5fb86c 12px,#60b869 18px,#60b866 24px,#60b966 30px,#60ba65 36px,#60bb63 42px,#60bc60 48px,#60bc5c 54px,#60bc57 60px,#60bc58 66px,#60bc5a 72px,#60bc5b 78px,#60bd5b 84px,#61bd5b 90px,#62bd5a 96px,#63bd59 102px,#69bf5d 108px,#73c366 114px,#81c86b 120px,#91cd6b 126px,#a0d06b 132px,#aed369 138px,#c1d75f 144px,#d3db56 150px,#e4db4d 156px,#efd846 162px,#efcb43 168px,#efc040 174px,#f0b63e 180px,#f0ab3d 186px,#f0a13e 192px,#f0983f 198px,#f0923f 203px)"></div>
<div style="left:20px;top:162px;width:204px;height:2px;background:linear-gradient(90deg,#5fb974 0px,#5fb971 6px,#5fb86e 12px,#60b86b 18px,#60b86a 24px,#60b96a 30px,#60ba69 36px,#60bb67 42px,#60bc64 48px,#60bc60 54px,#5fbc5b 60px,#5fbc59 66px,#5fbc5b 72px,#60bc5c 78px,#60bd5c 84px,#61bd5c 90px,#62bd5b 96px,#63bd5a 102px,#69bf5d 108px,#74c367 114px,#83c96c 120px,#95cf6c 126px,#a3d16c 132px,#b4d468 138px,#c7d95d 144px,#dadb53 150px,#ebdc4a 156px,#efd146 162px,#efc542 168px,#f0ba40 174px,#f0b03e 180px,#f0a53f 186px,#f09b3f 192px,#f09340 198px,#f08b41 204px)"></div>
<div style="left:20px;top:164px;width:206px;height:2px;background:linear-gradient(90deg,#5eb976 0px,#5fb974 6px,#5fb971 12px,#5fb86f 18px,#60b96d 24px,#60b96e 30px,#60ba6d 36px,#60bb6c 42px,#60bc69 48px,#60bc66 54px,#5fbc60 60px,#5fbc5a 66px,#5fbc5c 72px,#5fbc5d 78px,#60bc5d 84px,#60bd5d 90px,#61bd5c 96px,#63bd5b 102px,#67bf5c 108px,#73c367 114px,#83c86d 120px,#95cf6d 126px,#a5d26d 132px,#b6d568 138px,#cbda5d 144px,#dedb52 150px,#efdb49 156px,#efcd46 162px,#efc142 168px,#f0b63f 174px,#f0aa3f 180px,#f0a040 186px,#f09641 192px,#f08e41 198px,#f08642 204px,#f08442 206px)"></div>
<div style="left:20px;top:166px;width:208px;height:2px;background:linear-gradient(90deg,#5eb979 0px,#5eb977 6px,#5eb974 12px,#5fb972 18px,#5fb971 24px,#60ba71 30px,#60ba72 36px,#60bb71 42px,#60bc6f 48px,#60bc6b 54px,#60bc66 60px,#5fbc60 66px,#5fbc5c 72px,#5fbc5e 78px,#5fbc5e 84px,#60bd5e 90px,#61bd5e 96px,#62bd5c 102px,#65be5b 108px,#72c367 114px,#86ca72 120px,#9ad173 126px,#aad474 132px,#bcd76c 138px,#cfdb5c 144px,#e3dc51 150px,#efd749 156px,#efc945 162px,#f0bc42 168px,#f0b140 174px,#f0a540 180px,#f09b41 186px,#f09142 192px,#f08942 198px,#f08242 204px,#f07d41 208px)"></div>
<div style="left:21px;top:168px;width:209px;height:2px;background:linear-gradient(90deg,#5eb97b 0px,#5eb979 6px,#5eb977 12px,#5eb974 18px,#5fb975 24px,#5fba75 30px,#60bb76 36px,#60bb75 42px,#60bc73 48px,#60bd70 54px,#60bd6c 60px,#5fbd65 66px,#5ebc5e 72px,#5fbc5f 78px,#5fbc5f 84px,#60bd5f 90px,#61bd5f 96px,#62bd5d 102px,#65be5c 108px,#79c56d 114px,#8ecd78 120px,#a2d37a 126px,#b2d67a 132px,#c5da6e 138px,#d8dc5d 144px,#ebdc4e 150px,#efd048 156px,#f0c244 162px,#f0b641 168px,#f0a941 174px,#f09e42 180px,#f09442 186px,#f08b43 192px,#f08343 198px,#ef7c41 204px,#ef7740 209px)"></div>
<div style="left:21px;top:170px;width:211px;height:2px;background:linear-gradient(90deg,#5db97e 0px,#5db97c 6px,#5eb97a 12px,#5eb977 18px,#5eba78 24px,#5fba79 30px,#5fbb7a 36px,#60bb7a 42px,#60bc79 48px,#60bd76 54px,#60bd72 60px,#5fbd6c 66px,#5fbc64 72px,#5ebc60 78px,#5fbc61 84px,#5fbd61 90px,#60bd60 96px,#62bd5e 102px,#68bf5f 108px,#7dc772 114px,#92ce7f 120px,#a7d580 126px,#b7d880 132px,#cbdc73 138px,#dedd61 144px,#efdb4d 150px,#efcb48 156px,#f0bd44 162px,#f0b042 168px,#f0a342 174px,#f09843 180px,#f08e43 186px,#f08644 192px,#f07f42 198px,#ef7841 204px,#ef7240 210px,#ef713f 211px)"></div>
<div style="left:21px;top:172px;width:213px;height:2px;background:linear-gradient(90deg,#5dba81 0px,#5db97f 6px,#5db97d 12px,#5eb97b 18px,#5eba7c 24px,#5eba7d 30px,#5ebb7e 36px,#5fbc7e 42px,#60bc7e 48px,#60bd7c 54px,#60bd79 60px,#5fbd74 66px,#5fbd6c 72px,#5ebc62 78px,#5ebc62 84px,#5fbc62 90px,#60bd61 96px,#61bd60 102px,#6dc166 108px,#81c876 114px,#96d084 120px,#abd786 126px,#bcda86 132px,#d0de77 138px,#e4df64 144px,#f0d752 150px,#f0c547 156px,#f0b843 162px,#f0a943 168px,#f09d43 174px,#f09244 180px,#f08944 186px,#f08143 192px,#ef7a42 198px,#ef7441 204px,#ee6e3f 210px,#ee6b3e 213px)"></div>
<div style="left:21px;top:174px;width:215px;height:2px;background:linear-gradient(90deg,#5dba84 0px,#5dba82 6px,#5dba80 12px,#5db97e 18px,#5dba80 24px,#5ebb81 30px,#5ebb82 36px,#5ebc83 42px,#5fbd83 48px,#60bd82 54px,#60be80 60px,#60be7b 66px,#5fbe74 72px,#5ebd6b 78px,#5ebc63 84px,#5ebc63 90px,#5fbd63 96px,#63be64 102px,#71c36c 108px,#84ca7a 114px,#9ad28a 120px,#b0d98b 126px,#c0dc8b 132px,#d6e17b 138px,#eae068 144px,#f1d356 150px,#f0c048 156px,#f0b144 162px,#f0a344 168px,#f09744 174px,#f08c45 180px,#f08444 186px,#ef7c43 192px,#ef7641 198px,#ef6f40 204px,#ee693f 210px,#ee643d 215px)"></div>
<div style="left:22px;top:176px;width:216px;height:2px;background:linear-gradient(90deg,#5cba86 0px,#5cba85 6px,#5dba83 12px,#5dba82 18px,#5dba84 24px,#5dbb85 30px,#5dbc87 36px,#5ebc87 42px,#5ebd87 48px,#5fbe87 54px,#60be86 60px,#60bf82 66px,#5fbe7c 72px,#5ebe72 78px,#5dbc65 84px,#5ebc65 90px,#5fbd64 96px,#6ac16b 102px,#79c673 108px,#8bcd81 114px,#a2d590 120px,#b8db91 126px,#cadf8d 132px,#dfe27c 138px,#f2df68 144px,#f1cb58 150px,#f0b949 156px,#f0a745 162px,#f09a45 168px,#f08e45 174px,#f08545 180px,#ef7e43 186px,#ef7642 192px,#ef7041 198px,#ee6a3f 204px,#ee643e 210px,#ed5e3c 216px)"></div>
<div style="left:22px;top:178px;width:218px;height:2px;background:linear-gradient(90deg,#5cba8a 0px,#5cba88 6px,#5cba86 12px,#5cba86 18px,#5cbb88 24px,#5dbb89 30px,#5dbc8b 36px,#5dbd8c 42px,#5dbd8c 48px,#5ebe8c 54px,#5fbf8c 60px,#60bf8a 66px,#60bf84 72px,#5fbf7c 78px,#5ebd70 84px,#5dbc66 90px,#61bd68 96px,#6ec272 102px,#7dc87a 108px,#8fce85 114px,#a7d696 120px,#bcdd97 126px,#d0e191 132px,#e6e37f 138px,#f3db6c 144px,#f2c75d 150px,#f1b34f 156px,#f09f45 162px,#f09246 168px,#f08845 174px,#f08044 180px,#ef7843 186px,#ef7142 192px,#ee6b40 198px,#ee653f 204px,#ee603d 210px,#ed5a3c 216px,#ed583b 218px)"></div>
<div style="left:22px;top:180px;width:220px;height:2px;background:linear-gradient(90deg,#5aba90 0px,#5bba8d 6px,#5cba8a 12px,#5cba89 18px,#5cbb8b 24px,#5cbc8d 30px,#5cbc8f 36px,#5cbd90 42px,#5dbd91 48px,#5dbe91 54px,#5ebf91 60px,#5fbf90 66px,#60c08e 72px,#5fc086 78px,#5ebf7c 84px,#5dbd6c 90px,#65bf6e 96px,#73c478 102px,#82ca80 108px,#92cf88 114px,#abd89c 120px,#c1df9e 126px,#d6e396 132px,#ece482 138px,#f3d671 144px,#f2c361 150px,#f1ad54 156px,#f09847 162px,#f08b46 168px,#f08245 174px,#ef7a44 180px,#ef7343 186px,#ef6c41 192px,#ee6640 198px,#ee613e 204px,#ed5b3d 210px,#ed563b 216px,#ec543b 220px)"></div>
<div style="left:23px;top:182px;width:221px;height:2px;background:linear-gradient(90deg,#59ba95 0px,#5aba93 6px,#5aba90 12px,#5bba90 18px,#5bbb90 24px,#5bbc92 30px,#5bbd94 36px,#5cbd95 42px,#5cbe96 48px,#5cbe97 54px,#5dbf97 60px,#5ec096 66px,#5fc094 72px,#60c190 78px,#5fc086 84px,#5ebe77 90px,#6bc176 96px,#7ac77f 102px,#89cc87 108px,#9ad290 114px,#b3dba2 120px,#cae2a4 126px,#e0e697 132px,#f5e482 138px,#f4cf73 144px,#f3b964 150px,#f1a357 156px,#f08e49 162px,#f08346 168px,#ef7b45 174px,#ef7343 180px,#ef6d42 186px,#ee6641 192px,#ee613f 198px,#ed5b3e 204px,#ed573d 210px,#ec533c 216px,#ec513b 221px)"></div>
<div style="left:23px;top:184px;width:223px;height:2px;background:linear-gradient(90deg,#58b99b 0px,#59b999 6px,#59ba97 12px,#5aba96 18px,#5abb97 24px,#5abc98 30px,#5bbd98 36px,#5bbd9a 42px,#5bbe9b 48px,#5bbf9c 54px,#5cbf9d 60px,#5dc09c 66px,#5ec19b 72px,#5fc198 78px,#60c292 84px,#62c187 90px,#6fc47f 96px,#7fc985 102px,#8ece8d 108px,#9fd496 114px,#b8dda9 120px,#cfe4aa 126px,#e7e89b 132px,#f5df87 138px,#f4ca77 144px,#f3b369 150px,#f29d5b 156px,#f08a4c 162px,#f07d45 168px,#ef7544 174px,#ef6e43 180px,#ef6742 186px,#ee6140 192px,#ee5c3f 198px,#ed583e 204px,#ed553d 210px,#ec513c 216px,#ec4e3b 222px,#ec4d3b 223px)"></div>
<div style="left:23px;top:186px;width:225px;height:2px;background:linear-gradient(90deg,#57b9a1 0px,#58b99f 6px,#58b99d 12px,#58ba9d 18px,#59bb9e 24px,#59bc9f 30px,#59bda0 36px,#5abda0 42px,#5abea0 48px,#5abfa1 54px,#5bc0a2 60px,#5bc0a3 66px,#5cc1a2 72px,#5dc2a0 78px,#5fc29d 84px,#66c498 90px,#74c792 96px,#83ca8b 102px,#94d094 108px,#a4d69d 114px,#bddfaf 120px,#d5e6b1 126px,#eee99f 132px,#f6da8c 138px,#f5c37c 144px,#f3ad6e 150px,#f2985f 156px,#f1854f 162px,#ef7645 168px,#ef6f44 174px,#ef6843 180px,#ee6241 186px,#ee5d41 192px,#ed5940 198px,#ed563f 204px,#ec523e 210px,#ec4f3c 216px,#eb4c3b 222px,#eb4a3b 225px)"></div>
<div style="left:24px;top:188px;width:226px;height:2px;background:linear-gradient(90deg,#56b9a7 0px,#57b9a5 6px,#57b9a3 12px,#57baa4 18px,#57bba5 24px,#58bca6 30px,#58bda7 36px,#58bda8 42px,#59bea8 48px,#59bfa8 54px,#5ac0a8 60px,#5ac0a9 66px,#5bc1a9 72px,#5cc2a8 78px,#5dc3a5 84px,#6bc7a6 90px,#7bcba2 96px,#8ace97 102px,#9bd39d 108px,#addaa6 114px,#c6e3b7 120px,#dfe9b6 126px,#f7e99f 132px,#f6d18e 138px,#f5b97f 144px,#f3a46f 150px,#f29060 156px,#f07d50 162px,#ef6e45 168px,#ef6743 174px,#ee6243 180px,#ee5d42 186px,#ed5941 192px,#ed5640 198px,#ec523f 204px,#ec4f3e 210px,#eb4c3d 216px,#eb493b 222px,#eb473a 226px)"></div>
<div style="left:24px;top:190px;width:228px;height:2px;background:linear-gradient(90deg,#55b9ad 0px,#55b9ab 6px,#56b9aa 12px,#56baab 18px,#56bbac 24px,#56bcad 30px,#57bcae 36px,#57bdaf 42px,#57beb0 48px,#58bfb0 54px,#58c0b1 60px,#59c1b0 66px,#59c1b0 72px,#5ac2b0 78px,#5bc3ae 84px,#6cc8b2 90px,#7fcfb3 96px,#90d2aa 102px,#a0d5a3 108px,#b3dcad 114px,#cce5be 120px,#e7ecbb 126px,#f8e3a4 132px,#f7ca93 138px,#f5b283 144px,#f49f73 150px,#f28c63 156px,#f17852 162px,#ef6745 168px,#ef6245 174px,#ee5d44 180px,#ee5943 186px,#ed5642 192px,#ed5241 198px,#ec4f40 204px,#ec4c3e 210px,#eb4a3d 216px,#eb473c 222px,#ea453a 228px)"></div>
<div style="left:25px;top:192px;width:229px;height:2px;background:linear-gradient(90deg,#54b9b3 0px,#54b9b1 6px,#54b9b1 12px,#55bab2 18px,#55bbb3 24px,#55bcb5 30px,#55bcb6 36px,#55bdb7 42px,#56beb8 48px,#56bfb8 54px,#56c0b9 60px,#57c1b9 66px,#57c1b9 72px,#58c2b9 78px,#5dc4b9 84px,#6fcabd 90px,#83d0be 96px,#98d6bc 102px,#a9d9b0 108px,#bce0b7 114px,#d7e9c7 120px,#f4efbc 126px,#f8d8a7 132px,#f7be96 138px,#f5aa84 144px,#f49774 150px,#f28363 156px,#f07153 162px,#ef6146 168px,#ee5c46 174px,#ee5845 180px,#ed5544 186px,#ed5242 192px,#ec4f41 198px,#ec4c40 204px,#eb493f 210px,#eb473d 216px,#ea443c 222px,#ea423a 228px,#e9423a 229px)"></div>
<div style="left:25px;top:194px;width:231px;height:2px;background:linear-gradient(90deg,#53b8b9 0px,#53b9b8 6px,#53b9b7 12px,#53bab9 18px,#53baba 24px,#54bbbc 30px,#54bcbd 36px,#54bdbe 42px,#54bebf 48px,#54bfc0 54px,#55c0c1 60px,#55c1c2 66px,#55c1c2 72px,#56c2c3 78px,#5dc5c4 84px,#6fcbc8 90px,#83d1c9 96px,#99d8c9 102px,#afdec6 108px,#c3e2bf 114px,#ddebd0 120px,#faeec1 126px,#f9d0ad 132px,#f7b99a 138px,#f6a488 144px,#f49277 150px,#f27f67 156px,#f16c57 162px,#ef5b48 168px,#ee5747 174px,#ee5446 180px,#ed5144 186px,#ed4e43 192px,#ec4c42 198px,#ec4940 204px,#eb473f 210px,#ea443d 216px,#ea423c 222px,#e9403b 228px,#e93f3a 231px)"></div>
<div style="left:25px;top:196px;width:233px;height:2px;background:linear-gradient(90deg,#52b8bf 0px,#52b8be 6px,#52b9be 12px,#52b9c0 18px,#52bac1 24px,#52bbc3 30px,#52bcc4 36px,#52bdc6 42px,#52bec7 48px,#53bfc8 54px,#53c0ca 60px,#53c0cb 66px,#53c1cc 72px,#54c2cc 78px,#5cc5cf 84px,#6fccd3 90px,#83d2d4 96px,#99d8d5 102px,#b0dfd5 108px,#c9e6d1 114px,#e3eed7 120px,#fbe6c8 126px,#f9c9b2 132px,#f8b39e 138px,#f69e8c 144px,#f48c7b 150px,#f2796b 156px,#f1675a 162px,#ef564a 168px,#ee5248 174px,#ed4f47 180px,#ed4d45 186px,#ec4b44 192px,#ec4842 198px,#eb4641 204px,#eb443f 210px,#ea423e 216px,#ea403c 222px,#e93e3b 228px,#e93d3a 233px)"></div>
<div style="left:26px;top:198px;width:234px;height:2px;background:linear-gradient(90deg,#51b8c5 0px,#51b8c4 6px,#51b8c5 12px,#51b9c7 18px,#51bac8 24px,#51bbca 30px,#51bccc 36px,#51bdcd 42px,#51becf 48px,#51bfd1 54px,#51c0d2 60px,#51c0d4 66px,#51c1d5 72px,#51c2d7 78px,#5ec7da 84px,#71cdde 90px,#86d4df 96px,#9cdae1 102px,#b4e2e3 108px,#d0eae4 114px,#f3f4e6 120px,#fbd8ca 126px,#f9beb3 132px,#f7a99f 138px,#f6958d 144px,#f4837c 150px,#f2716b 156px,#f0605b 162px,#ee4e4a 168px,#ee4c49 174px,#ed4a47 180px,#ed4846 186px,#ec4744 192px,#eb4543 198px,#eb4341 204px,#ea413f 210px,#ea3f3e 216px,#e93e3c 222px,#e83c3b 228px,#e83b3a 234px)"></div>
<div style="left:26px;top:200px;width:236px;height:2px;background:linear-gradient(90deg,#4fb7c9 0px,#4fb7c9 6px,#4fb8ca 12px,#4fb8cc 18px,#4fb9ce 24px,#4fbacf 30px,#4fbbd1 36px,#4fbcd3 42px,#4fbdd5 48px,#4fbed7 54px,#4ebed9 60px,#4ebfdb 66px,#4ec0dc 72px,#4ec1de 78px,#5bc6e2 84px,#6fcce5 90px,#83d2e8 96px,#99d9ea 102px,#b1e0ed 108px,#cce8f1 114px,#f6eff0 120px,#fcd2d1 126px,#f9b9b9 132px,#f8a4a4 138px,#f69192 144px,#f48081 150px,#f26e6f 156px,#f05c5e 162px,#ee4c4e 168px,#ee494b 174px,#ed4749 180px,#ec4647 186px,#ec4446 192px,#eb4344 198px,#eb4142 204px,#ea3f40 210px,#e93e3f 216px,#e93c3d 222px,#e83b3b 228px,#e83a3a 234px,#e83a3a 236px)"></div>
<div style="left:26px;top:202px;width:238px;height:2px;background:linear-gradient(90deg,#4db6cc 0px,#4db6cc 6px,#4cb6cd 12px,#4cb7cf 18px,#4cb8d1 24px,#4cb8d3 30px,#4cb9d5 36px,#4cbad6 42px,#4bbad8 48px,#4bbbda 54px,#4bbcdd 60px,#4abcdf 66px,#4abde1 72px,#49bde3 78px,#57c2e7 84px,#6ac9ea 90px,#7eceed 96px,#93d5f0 102px,#acd9f0 108px,#caddee 114px,#f1e2ec 120px,#fcced6 126px,#f9b7bf 132px,#f8a2aa 138px,#f69097 144px,#f47e86 150px,#f26d74 156px,#f05b63 162px,#ee4b52 168px,#ee474e 174px,#ed464c 180px,#ec454a 186px,#ec4348 192px,#eb4246 198px,#eb4044 204px,#ea3f42 210px,#e93d40 216px,#e93c3e 222px,#e83a3d 228px,#e83a3c 234px,#e83a3c 238px)"></div>
<div style="left:27px;top:204px;width:239px;height:2px;background:linear-gradient(90deg,#4ab4cf 0px,#4ab4cf 6px,#4ab4d0 12px,#4ab5d2 18px,#49b6d4 24px,#49b6d6 30px,#49b7d8 36px,#49b8da 42px,#48b8dc 48px,#48b9de 54px,#47b9e1 60px,#46bae3 66px,#46bae6 72px,#44bae8 78px,#55c0ec 84px,#68c6f0 90px,#7ecaf0 96px,#95cdee 102px,#afd0ed 108px,#ccd7eb 114px,#f3d7e6 120px,#fbc5d5 126px,#f9b0bf 132px,#f79cab 138px,#f68b99 144px,#f47987 150px,#f26875 156px,#f05764 162px,#ee4753 168px,#ee4650 174px,#ed454e 180px,#ec444c 186px,#ec4249 192px,#eb4147 198px,#eb4045 204px,#ea3e43 210px,#e93d41 216px,#e93b3f 222px,#e83a3d 228px,#e8393d 234px,#e8393d 239px)"></div>
<div style="left:27px;top:206px;width:241px;height:2px;background:linear-gradient(90deg,#48b3d1 0px,#48b2d2 6px,#47b3d3 12px,#47b3d5 18px,#47b4d7 24px,#46b5d9 30px,#46b5db 36px,#45b6de 42px,#45b6e0 48px,#44b6e2 54px,#43b7e5 60px,#42b7e7 66px,#41b7ea 72px,#40b6ed 78px,#52bbef 84px,#67bfee 90px,#7dc2ed 96px,#94c5ec 102px,#aec7ea 108px,#c9d0e9 114px,#eecee4 120px,#fac0d6 126px,#f9adc2 132px,#f799af 138px,#f6889d 144px,#f4778b 150px,#f26679 156px,#f05668 162px,#ee4657 168px,#ed4553 174px,#ed4451 180px,#ec434e 186px,#ec414b 192px,#eb4049 198px,#eb3f47 204px,#ea3e45 210px,#e93c43 216px,#e93b41 222px,#e83a3f 228px,#e8393e 234px,#e8393e 240px,#e8393e 241px)"></div>
<div style="left:28px;top:208px;width:242px;height:2px;background:linear-gradient(90deg,#46b1d4 0px,#45b1d5 6px,#45b1d6 12px,#44b2d8 18px,#44b2db 24px,#43b3dd 30px,#43b3df 36px,#42b4e1 42px,#42b4e4 48px,#41b4e6 54px,#40b4e9 60px,#3eb4ec 66px,#3eb2ed 72px,#40b0ec 78px,#54b4ec 84px,#69b8ec 90px,#7fbaea 96px,#97bce9 102px,#afc5e8 108px,#ccc9e6 114px,#eec4df 120px,#f9b7d2 126px,#f8a6c1 132px,#f794af 138px,#f5829e 144px,#f4728c 150px,#f2627a 156px,#f05268 162px,#ee4459 168px,#ed4356 174px,#ed4253 180px,#ec4150 186px,#ec404d 192px,#eb3f4a 198px,#ea3e48 204px,#ea3d46 210px,#e93c44 216px,#e93a41 222px,#e8393f 228px,#e8393f 234px,#e8393f 240px,#e8393f 242px)"></div>
<div style="left:28px;top:210px;width:244px;height:2px;background:linear-gradient(90deg,#43b0d7 0px,#43afd7 6px,#42afd9 12px,#42b0db 18px,#41b0de 24px,#41b1e0 30px,#40b1e2 36px,#3fb1e5 42px,#3eb2e7 48px,#3db2ea 54px,#3db0eb 60px,#3eaeeb 66px,#3eacea 72px,#3fa8ea 78px,#53acea 84px,#68b0e9 90px,#7eb2e8 96px,#95b7e7 102px,#acc0e6 108px,#c9c1e3 114px,#eabddd 120px,#f6b1d1 126px,#f8a2c2 132px,#f791b1 138px,#f580a0 144px,#f46f8f 150px,#f2607d 156px,#f0506c 162px,#ee425c 168px,#ed4258 174px,#ed4155 180px,#ec4152 186px,#ec404f 192px,#eb3f4c 198px,#ea3e4a 204px,#ea3c47 210px,#e93b45 216px,#e93a43 222px,#e83940 228px,#e83940 234px,#e83940 240px,#e8393f 244px)"></div>
<div style="left:28px;top:212px;width:246px;height:2px;background:linear-gradient(90deg,#41aed9 0px,#40aeda 6px,#40aedc 12px,#3faede 18px,#3faee1 24px,#3eafe3 30px,#3dafe5 36px,#3cafe8 42px,#3cafe9 48px,#3cade9 54px,#3dabe9 60px,#3ea8e8 66px,#3ea5e8 72px,#3fa1e7 78px,#52a5e7 84px,#67a9e7 90px,#7daae6 96px,#92b3e5 102px,#aab9e4 108px,#c6bae1 114px,#e6b6db 120px,#f3abcf 126px,#f89ec3 132px,#f78eb2 138px,#f57ea2 144px,#f36d91 150px,#f25d80 156px,#f04e6f 162px,#ee415f 168px,#ed415b 174px,#ed4057 180px,#ec4054 186px,#ec3f51 192px,#eb3e4e 198px,#ea3d4b 204px,#ea3c49 210px,#e93b46 216px,#e93a44 222px,#e83841 228px,#e83841 234px,#e83841 240px,#e83940 246px)"></div>
<div style="left:29px;top:214px;width:247px;height:2px;background:linear-gradient(90deg,#3facdc 0px,#3eacdd 6px,#3dacdf 12px,#3cace2 18px,#3cade4 24px,#3bade6 30px,#3bace8 36px,#3babe8 42px,#3ca9e7 48px,#3da7e7 54px,#3da5e7 60px,#3ea2e6 66px,#3e9ee5 72px,#409ae4 78px,#549ee4 84px,#69a1e4 90px,#7ea8e4 96px,#92b1e3 102px,#acb4e1 108px,#c9b3de 114px,#e6add7 120px,#f2a3cc 126px,#f797c1 132px,#f688b1 138px,#f579a1 144px,#f36890 150px,#f1587f 156px,#ef496e 162px,#ee3f61 168px,#ed3f5d 174px,#ed3f59 180px,#ec3f55 186px,#eb3e52 192px,#eb3d4f 198px,#ea3c4c 204px,#ea3b4a 210px,#e93a47 216px,#e83945 222px,#e83842 228px,#e83842 234px,#e83842 240px,#e83841 246px,#e83841 247px)"></div>
<div style="left:29px;top:216px;width:250px;height:2px;background:linear-gradient(90deg,#3cabdf 0px,#3baae0 6px,#3baae2 12px,#3aabe5 18px,#3aaae6 24px,#3aa9e6 30px,#3ba8e6 36px,#3ba6e6 42px,#3ca4e5 48px,#3ca2e5 54px,#3d9fe5 60px,#3e9ce4 66px,#3e98e3 72px,#4093e2 78px,#5397e2 84px,#679ce2 90px,#7ba5e2 96px,#90abe1 102px,#a9addf 108px,#c7acdc 114px,#e2a7d5 120px,#ef9dca 126px,#f592c0 132px,#f685b2 138px,#f476a2 144px,#f36692 150px,#f15681 156px,#ef4770 162px,#ee3e64 168px,#ed3e5f 174px,#ed3e5b 180px,#ec3e57 186px,#eb3d54 192px,#eb3c51 198px,#ea3c4e 204px,#ea3b4b 210px,#e93a48 216px,#e83946 222px,#e83844 228px,#e83843 234px,#e83843 240px,#e83842 246px,#e83842 250px)"></div>
<div style="left:30px;top:218px;width:251px;height:2px;background:linear-gradient(90deg,#3aa9e2 0px,#39a8e3 6px,#38a8e4 12px,#39a7e4 18px,#3aa6e4 24px,#3aa4e4 30px,#3ba2e4 36px,#3ba1e4 42px,#3c9ee3 48px,#3d9ce3 54px,#3d99e2 60px,#3e95e2 66px,#3f92e1 72px,#418ddf 78px,#5590df 84px,#699ae0 90px,#7ca2e0 96px,#93a6df 102px,#aca7dd 108px,#caa6da 114px,#e29fd2 120px,#ee95c7 126px,#f48bbd 132px,#f57fb0 138px,#f470a1 144px,#f26190 150px,#f05280 156px,#ef426f 162px,#ed3d66 168px,#ed3d61 174px,#ec3d5d 180px,#ec3d59 186px,#eb3c55 192px,#eb3c52 198px,#ea3b4f 204px,#e93a4c 210px,#e93949 216px,#e83846 222px,#e83845 228px,#e83844 234px,#e83844 240px,#e83843 246px,#e83843 251px)"></div>
<div style="left:30px;top:220px;width:253px;height:2px;background:linear-gradient(90deg,#38a7e4 0px,#38a5e3 6px,#38a4e3 12px,#39a2e3 18px,#3aa1e2 24px,#3aa0e2 30px,#3b9ee2 36px,#3b9ce2 42px,#3c99e1 48px,#3c96e1 54px,#3d93e0 60px,#3e91e0 66px,#408ddf 72px,#4287dd 78px,#538dde 84px,#6696de 90px,#799ede 96px,#91a1dd 102px,#aaa1db 108px,#c7a0d8 114px,#df99d0 120px,#ec90c6 126px,#f186bc 132px,#f57bb1 138px,#f46da1 144px,#f25e91 150px,#f04f81 156px,#ee4071 162px,#ed3c68 168px,#ed3c63 174px,#ec3c5f 180px,#ec3c5b 186px,#eb3c57 192px,#eb3b53 198px,#ea3a50 204px,#e93a4d 210px,#e9394a 216px,#e83847 222px,#e83746 228px,#e83745 234px,#e83845 240px,#e83844 246px,#e83844 252px,#e83844 253px)"></div>
<div style="left:31px;top:222px;width:254px;height:2px;background:linear-gradient(90deg,#38a3e2 0px,#38a1e1 6px,#389fe1 12px,#399ee1 18px,#3a9ce1 24px,#3a9be0 30px,#3b99e0 36px,#3b96e0 42px,#3c94df 48px,#3d91df 54px,#3e8fde 60px,#3f8cdd 66px,#4187dc 72px,#4383db 78px,#548bdc 84px,#6694dd 90px,#7c9adc 96px,#929bdb 102px,#ac9ad9 108px,#ca9ad5 114px,#de92cd 120px,#ea88c3 126px,#f080b9 132px,#f475ae 138px,#f3679f 144px,#f1598f 150px,#f04b80 156px,#ee3c6f 162px,#ed3b69 168px,#ed3b64 174px,#ec3b60 180px,#ec3b5c 186px,#eb3b58 192px,#ea3a54 198px,#ea3a51 204px,#e9394e 210px,#e9384b 216px,#e83748 222px,#e83747 228px,#e83746 234px,#e83745 240px,#e83845 246px,#e83844 252px,#e83844 254px)"></div>
<div style="left:31px;top:224px;width:256px;height:2px;background:linear-gradient(90deg,#389fe1 0px,#389ddf 6px,#389bdf 12px,#399adf 18px,#3a98df 24px,#3a96df 30px,#3b94de 36px,#3b91de 42px,#3c8fdd 48px,#3d8ddd 54px,#3e8bdc 60px,#4087db 66px,#4182da 72px,#4382da 78px,#5188da 84px,#6390db 90px,#7a94da 96px,#9096d9 102px,#a994d7 108px,#c794d3 114px,#db8dcb 120px,#e883c1 126px,#ee7bb8 132px,#f270ad 138px,#f364a0 144px,#f15690 150px,#ef4880 156px,#ee3b71 162px,#ed3b6b 168px,#ed3b66 174px,#ec3a62 180px,#ec3a5d 186px,#eb3a59 192px,#ea3a56 198px,#ea3952 204px,#e9394f 210px,#e9384c 216px,#e83749 222px,#e83748 228px,#e83747 234px,#e83746 240px,#e83746 246px,#e83745 252px,#e83745 256px)"></div>
<div style="left:31px;top:226px;width:258px;height:2px;background:linear-gradient(90deg,#389cdf 0px,#3899de 6px,#3897dd 12px,#3995dd 18px,#3a93dd 24px,#3a91dd 30px,#3b8fdc 36px,#3b8ddc 42px,#3c8cdc 48px,#3d8adb 54px,#3f87da 60px,#4083d9 66px,#4281d9 72px,#4480d8 78px,#4e84d8 84px,#618bd9 90px,#778fd9 96px,#8f90d7 102px,#a68fd5 108px,#c48ed2 114px,#d887c9 120px,#e67dc0 126px,#ec76b6 132px,#f06cac 138px,#f260a0 144px,#f15391 150px,#ef4581 156px,#ee3a73 162px,#ed3a6d 168px,#ed3a68 174px,#ec3a63 180px,#eb3a5f 186px,#eb395b 192px,#ea3957 198px,#ea3953 204px,#e93850 210px,#e9374d 216px,#e8374a 222px,#e83749 228px,#e83748 234px,#e83747 240px,#e83747 246px,#e83746 252px,#e83746 258px)"></div>
<div style="left:32px;top:228px;width:259px;height:2px;background:linear-gradient(90deg,#3897dd 0px,#3894dc 6px,#3892dc 12px,#3991db 18px,#3a8fdb 24px,#3a8cdb 30px,#3b8ada 36px,#3c8ada 42px,#3d88da 48px,#3e86d9 54px,#3f83d8 60px,#4180d8 66px,#427fd8 72px,#447ed7 78px,#4e82d7 84px,#6387d7 90px,#788ad6 96px,#908ad5 102px,#a989d3 108px,#c688cf 114px,#d880c6 120px,#e576bc 126px,#ea6fb3 132px,#ee66a9 138px,#f25a9d 144px,#f04e8e 150px,#ef407f 156px,#ed3974 162px,#ed396e 168px,#ec3969 174px,#ec3964 180px,#eb3960 186px,#eb395b 192px,#ea3858 198px,#ea3854 204px,#e93851 210px,#e8374d 216px,#e8364b 222px,#e8364a 228px,#e83749 234px,#e83748 240px,#e83748 246px,#e83747 252px,#e83746 258px,#e83746 259px)"></div>
<div style="left:32px;top:230px;width:256px;height:2px;background:linear-gradient(90deg,#3894dc 0px,#3890db 6px,#388eda 12px,#398cda 18px,#3a8ad9 24px,#3a88d9 30px,#3b88d9 36px,#3c87d9 42px,#3d85d8 48px,#3e83d8 54px,#407fd7 60px,#417ed7 66px,#437ed6 72px,#457dd6 78px,#4b7ed5 84px,#6082d5 90px,#7584d4 96px,#8d85d3 102px,#a784d1 108px,#c383cd 114px,#d47bc5 120px,#e271bb 126px,#e86ab2 132px,#ec61a8 138px,#f0579d 144px,#f04a8f 150px,#ee3e80 156px,#ed3976 162px,#ed3970 168px,#ec396b 174px,#ec3966 180px,#eb3961 186px,#eb385d 192px,#ea3859 198px,#ea3855 204px,#e93752 210px,#e8364e 216px,#e8364c 222px,#e8364b 228px,#e8364a 234px,#e83749 240px,#e83749 246px,#e83748 252px,#e83748 256px)"></div>
<div style="left:33px;top:232px;width:251px;height:2px;background:linear-gradient(90deg,#388fda 0px,#388cd9 6px,#388ad8 12px,#3988d8 18px,#3a86d8 24px,#3a86d8 30px,#3b85d7 36px,#3d84d7 42px,#3e82d6 48px,#3f7fd6 54px,#407dd6 60px,#427dd6 66px,#437dd5 72px,#457cd4 78px,#4c7ad3 84px,#617dd3 90px,#777fd2 96px,#8e7fd1 102px,#a87ece 108px,#c37cca 114px,#d374c1 120px,#e16ab8 126px,#e664ae 132px,#eb5ba4 138px,#ef519a 144px,#ef458c 150px,#ee387d 156px,#ed3876 162px,#ed3871 168px,#ec386b 174px,#ec3866 180px,#eb3862 186px,#eb385d 192px,#ea3759 198px,#e93756 204px,#e93752 210px,#e8364f 216px,#e8364d 222px,#e8364c 228px,#e8364b 234px,#e8364a 240px,#e83749 246px,#e83749 251px)"></div>
<div style="left:33px;top:234px;width:246px;height:2px;background:linear-gradient(90deg,#388cd9 0px,#3888d7 6px,#3885d6 12px,#3984d6 18px,#3a84d6 24px,#3b83d6 30px,#3c82d6 36px,#3d81d5 42px,#3e7fd5 48px,#3f7cd4 54px,#407cd5 60px,#427cd5 66px,#437bd4 72px,#457ad3 78px,#4c77d2 84px,#5e78d1 90px,#747ad0 96px,#8b79cf 102px,#a579cc 108px,#bf77c8 114px,#d06fbf 120px,#de65b6 126px,#e45ead 132px,#e856a3 138px,#ed4d98 144px,#ef428c 150px,#ed377f 156px,#ed3878 162px,#ed3872 168px,#ec386d 174px,#eb3868 180px,#eb3863 186px,#ea375f 192px,#ea375b 198px,#e93757 204px,#e93653 210px,#e83650 216px,#e8364e 222px,#e8364d 228px,#e8364c 234px,#e8364b 240px,#e8364a 246px)"></div>
<div style="left:34px;top:236px;width:241px;height:2px;background:linear-gradient(90deg,#3887d7 0px,#3884d5 6px,#3881d5 12px,#3981d5 18px,#3a81d5 24px,#3b81d5 30px,#3c80d4 36px,#3d7ed4 42px,#3e7bd3 48px,#3f7bd3 54px,#417bd4 60px,#427bd4 66px,#447ad3 72px,#4878d2 78px,#4f74d0 84px,#5e74cf 90px,#7575ce 96px,#8b74cc 102px,#a774ca 108px,#be70c5 114px,#cf68bc 120px,#dd5fb3 126px,#e258aa 132px,#e750a0 138px,#eb4795 144px,#ee3c8a 150px,#ed377f 156px,#ed3778 162px,#ec3773 168px,#ec376d 174px,#eb3768 180px,#eb3764 186px,#ea375f 192px,#ea375b 198px,#e93657 204px,#e93653 210px,#e83550 216px,#e8354e 222px,#e8364d 228px,#e8364d 234px,#e8364c 240px,#e8364c 241px)"></div>
<div style="left:34px;top:238px;width:237px;height:2px;background:linear-gradient(90deg,#3884d5 0px,#3880d4 6px,#397fd3 12px,#397fd3 18px,#3a7fd3 24px,#3b7ed3 30px,#3c7dd3 36px,#3d7bd2 42px,#3f7ad2 48px,#407ad3 54px,#417ad3 60px,#427ad3 66px,#4479d2 72px,#4976d1 78px,#5072cf 84px,#5b6ecd 90px,#726fcc 96px,#886eca 102px,#a36ec8 108px,#bb6bc3 114px,#cb63bb 120px,#d95ab1 126px,#e053a8 132px,#e44c9e 138px,#e94394 144px,#ed3989 150px,#ed3680 156px,#ed377a 162px,#ec3774 168px,#ec376f 174px,#eb3769 180px,#eb3765 186px,#ea3760 192px,#ea365c 198px,#e93658 204px,#e93554 210px,#e83551 216px,#e8354f 222px,#e8354e 228px,#e8364d 234px,#e8364d 237px)"></div>
<div style="left:35px;top:240px;width:232px;height:2px;background:linear-gradient(90deg,#3880d4 0px,#387ed3 6px,#397dd2 12px,#3a7dd2 18px,#3b7dd2 24px,#3c7cd2 30px,#3d7ad1 36px,#3e79d1 42px,#3f79d1 48px,#4079d2 54px,#4179d2 60px,#4278d2 66px,#4577d1 72px,#4b74d0 78px,#5370ce 84px,#5d6acb 90px,#736aca 96px,#8969c8 102px,#a469c6 108px,#ba65c0 114px,#ca5db7 120px,#d853ae 126px,#de4da5 132px,#e3469b 138px,#e73d91 144px,#ec3687 150px,#ed3680 156px,#ec367a 162px,#ec3674 168px,#ec376f 174px,#eb376a 180px,#eb3665 186px,#ea3661 192px,#e9365d 198px,#e93559 204px,#e83555 210px,#e83552 216px,#e83550 222px,#e8354f 228px,#e8354f 232px)"></div>
<div style="left:35px;top:242px;width:227px;height:2px;background:linear-gradient(90deg,#387ed3 0px,#387dd1 6px,#397cd1 12px,#3a7bd1 18px,#3b7bd0 24px,#3c7ad0 30px,#3d78d0 36px,#3e78d0 42px,#3f78d1 48px,#4078d1 54px,#4178d1 60px,#4277d1 66px,#4675d0 72px,#4c72cf 78px,#536ecd 84px,#5f69ca 90px,#6f65c8 96px,#8664c6 102px,#a064c4 108px,#b660be 114px,#c658b6 120px,#d54fac 126px,#db48a3 132px,#e0419a 138px,#e53990 144px,#ea3688 150px,#ed3582 156px,#ec367b 162px,#ec3676 168px,#eb3670 174px,#eb366b 180px,#ea3666 186px,#ea3662 192px,#e9365e 198px,#e9355a 204px,#e83556 210px,#e83553 216px,#e83551 222px,#e83550 227px)"></div>
<div style="left:36px;top:244px;width:222px;height:2px;background:linear-gradient(90deg,#387dd1 0px,#397bd0 6px,#397acf 12px,#3a79cf 18px,#3b78cf 24px,#3c77ce 30px,#3d76cf 36px,#3e77cf 42px,#3f77d0 48px,#4077d0 54px,#4177d0 60px,#4376d0 66px,#4873cf 72px,#4e70ce 78px,#556ccc 84px,#6267c9 90px,#7061c6 96px,#875fc4 102px,#a15ec1 108px,#b559bb 114px,#c552b2 120px,#d348a9 126px,#da42a0 132px,#df3b97 138px,#e4388f 144px,#e93688 150px,#ed3582 156px,#ec357b 162px,#ec3676 168px,#eb3670 174px,#eb366b 180px,#ea3667 186px,#ea3562 192px,#e9355e 198px,#e9355a 204px,#e83456 210px,#e83454 216px,#e83552 222px)"></div>
<div style="left:36px;top:246px;width:218px;height:2px;background:linear-gradient(90deg,#397bd0 0px,#3979cf 6px,#3978ce 12px,#3a77ce 18px,#3b76cd 24px,#3c75cd 30px,#3d76ce 36px,#3e76cf 42px,#3f76cf 48px,#4076cf 54px,#4176cf 60px,#4474cf 66px,#4972ce 72px,#4f6fcd 78px,#566bcb 84px,#6366c8 90px,#7160c5 96px,#855bc2 102px,#9d59bf 108px,#b154b9 114px,#c14db1 120px,#d044a8 126px,#d73d9f 132px,#dd3a97 138px,#e23890 144px,#e73689 150px,#ec3583 156px,#ec357d 162px,#ec3577 168px,#eb3571 174px,#eb356c 180px,#ea3568 186px,#ea3563 192px,#e9355f 198px,#e9345b 204px,#e83457 210px,#e83455 216px,#e83454 218px)"></div>
<div style="left:37px;top:248px;width:212px;height:2px;background:linear-gradient(90deg,#3979cf 0px,#3978ce 6px,#3a76cd 12px,#3a75cc 18px,#3b74cc 24px,#3c74cd 30px,#3d75cd 36px,#3e75ce 42px,#3f75ce 48px,#4075ce 54px,#4174ce 60px,#4573ce 66px,#4a70cd 72px,#506dcc 78px,#5969ca 84px,#6664c7 90px,#735ec4 96px,#885ac1 102px,#9e56be 108px,#b04fb6 114px,#c047ae 120px,#cf3fa5 126px,#d63c9e 132px,#dc3a96 138px,#e13890 144px,#e63689 150px,#eb3583 156px,#ec347d 162px,#eb3577 168px,#eb3572 174px,#ea356d 180px,#ea3568 186px,#e93563 192px,#e9345f 198px,#e8345b 204px,#e83458 210px,#e83457 212px)"></div>
<div style="left:38px;top:250px;width:207px;height:2px;background:linear-gradient(90deg,#3978ce 0px,#3976cc 6px,#3a74cb 12px,#3b73cb 18px,#3b73cb 24px,#3c74cc 30px,#3d74cd 36px,#3e74cd 42px,#3f74ce 48px,#4074ce 54px,#4273cd 60px,#4671cd 66px,#4b6ecc 72px,#516bcb 78px,#5c67c8 84px,#6862c6 90px,#775dc3 96px,#8c59c0 102px,#a155bd 108px,#b14db5 114px,#c046ac 120px,#cf3fa4 126px,#d63c9d 132px,#dc3a96 138px,#e1388f 144px,#e53689 150px,#ea3583 156px,#ec347d 162px,#eb3477 168px,#eb3472 174px,#ea356d 180px,#ea3468 186px,#e93463 192px,#e9345f 198px,#e8345b 204px,#e83459 207px)"></div>
<div style="left:38px;top:252px;width:203px;height:2px;background:linear-gradient(90deg,#3976cd 0px,#3974cb 6px,#3a72ca 12px,#3b72ca 18px,#3b72cb 24px,#3c73cc 30px,#3d73cc 36px,#3e73cd 42px,#3f73cd 48px,#4073cd 54px,#4372cd 60px,#4770cc 66px,#4c6dcb 72px,#526aca 78px,#5d66c8 84px,#6961c5 90px,#775cc2 96px,#8b59c0 102px,#a055bd 108px,#af4db5 114px,#be46ad 120px,#cd3fa5 126px,#d53c9d 132px,#da3a97 138px,#df3890 144px,#e4368a 150px,#e83583 156px,#eb347d 162px,#eb3478 168px,#eb3473 174px,#ea346e 180px,#ea3469 186px,#e93464 192px,#e93460 198px,#e8335d 203px)"></div>
<div style="left:39px;top:254px;width:197px;height:2px;background:linear-gradient(90deg,#3975cc 0px,#3a73ca 6px,#3a70c8 12px,#3b71c9 18px,#3b71ca 24px,#3c72cb 30px,#3d72cc 36px,#3d72cc 42px,#3f72cc 48px,#4072cc 54px,#4470cc 60px,#486ecb 66px,#4d6bca 72px,#5468c9 78px,#5f64c6 84px,#6b5fc4 90px,#7b5bc1 96px,#8e58bf 102px,#a153bb 108px,#b04cb3 114px,#bf45ac 120px,#cd3fa4 126px,#d43c9d 132px,#d93a96 138px,#de3890 144px,#e33689 150px,#e73583 156px,#eb337d 162px,#eb3478 168px,#ea3472 174px,#ea346e 180px,#e93469 186px,#e93464 192px,#e93361 197px)"></div>
<div style="left:39px;top:256px;width:193px;height:2px;background:linear-gradient(90deg,#3a73cb 0px,#3a71c9 6px,#3a70c8 12px,#3a70c9 18px,#3b71ca 24px,#3c71ca 30px,#3c71cb 36px,#3d71cb 42px,#3e71cb 48px,#4170cb 54px,#446fcb 60px,#486dca 66px,#4d6ac9 72px,#5567c8 78px,#6063c6 84px,#6b5fc3 90px,#7b5bc1 96px,#8d57be 102px,#a053bb 108px,#ae4cb3 114px,#bd46ac 120px,#ca3fa4 126px,#d33c9d 132px,#d83a97 138px,#dd3890 144px,#e2368a 150px,#e63584 156px,#ea337e 162px,#eb3378 168px,#ea3373 174px,#ea336e 180px,#e9336a 186px,#e93365 192px,#e93364 193px)"></div>
<div style="left:40px;top:258px;width:188px;height:2px;background:linear-gradient(90deg,#3a72c9 0px,#3a70c8 6px,#3a6fc7 12px,#3a6fc8 18px,#3b70c9 24px,#3b70ca 30px,#3c70ca 36px,#3d70cb 42px,#3e70cb 48px,#416fcb 54px,#456dca 60px,#496bca 66px,#4e69c8 72px,#5765c7 78px,#6262c4 84px,#6c5dc2 90px,#7e5ac0 96px,#9056bd 102px,#a152ba 108px,#af4bb2 114px,#bd45ab 120px,#cb3ea3 126px,#d23b9d 132px,#d73a96 138px,#dc3890 144px,#e1368a 150px,#e53584 156px,#e9337e 162px,#eb3378 168px,#ea3373 174px,#ea336e 180px,#e9336a 186px,#e93368 188px)"></div>
<div style="left:40px;top:260px;width:183px;height:2px;background:linear-gradient(90deg,#3a70c8 0px,#3a6fc8 6px,#3a6ec7 12px,#3a6fc8 18px,#3b6fc9 24px,#3b6fc9 30px,#3c6fca 36px,#3d6fca 42px,#3f6fca 48px,#426eca 54px,#456cca 60px,#496ac9 66px,#4e68c8 72px,#5864c6 78px,#6261c4 84px,#6c5dc1 90px,#7d59bf 96px,#8f56bd 102px,#9f52b9 108px,#ae4bb2 114px,#bb45ab 120px,#c83fa4 126px,#d13b9d 132px,#d63a97 138px,#db3891 144px,#df378a 150px,#e33584 156px,#e7347f 162px,#ea3279 168px,#ea3374 174px,#e9336f 180px,#e9336d 183px)"></div>
<div style="left:41px;top:262px;width:178px;height:2px;background:linear-gradient(90deg,#3a70c8 0px,#3a6fc7 6px,#396ec7 12px,#3a6ec7 18px,#3a6ec8 24px,#3b6fc9 30px,#3c6fc9 36px,#3d6ec9 42px,#3f6ec9 48px,#426dc9 54px,#466bc9 60px,#4a69c8 66px,#5066c7 72px,#5a63c5 78px,#635fc3 84px,#6f5cc1 90px,#8058bf 96px,#9155bc 102px,#a050b8 108px,#ae4ab1 114px,#bc44aa 120px,#c83ea3 126px,#d03b9d 132px,#d53a96 138px,#da3890 144px,#df368a 150px,#e33584 156px,#e6347e 162px,#ea3279 168px,#ea3274 174px,#e93270 178px)"></div>
<div style="left:42px;top:264px;width:173px;height:2px;background:linear-gradient(90deg,#3a6fc8 0px,#3a6ec7 6px,#396dc7 12px,#3a6dc7 18px,#3a6dc8 24px,#3b6ec8 30px,#3c6ec9 36px,#3d6dc9 42px,#406dc9 48px,#436bc8 54px,#466ac8 60px,#4a67c7 66px,#5265c6 72px,#5b62c4 78px,#655ec2 84px,#725bc0 90px,#8257be 96px,#9254bc 102px,#a14fb7 108px,#af49b0 114px,#bc43a9 120px,#c83ea2 126px,#d03b9c 132px,#d53996 138px,#d93890 144px,#de368a 150px,#e23584 156px,#e6337e 162px,#e93279 168px,#ea3274 173px)"></div>
<div style="left:42px;top:266px;width:169px;height:2px;background:linear-gradient(90deg,#3a6fc7 0px,#396ec7 6px,#396dc6 12px,#396cc6 18px,#3a6dc7 24px,#3b6dc8 30px,#3b6dc8 36px,#3d6cc8 42px,#406cc8 48px,#436ac8 54px,#4669c7 60px,#4a67c7 66px,#5364c5 72px,#5b61c3 78px,#655ec1 84px,#725abf 90px,#8257bd 96px,#9154bb 102px,#a04fb6 108px,#ad49b0 114px,#ba44a9 120px,#c63ea3 126px,#cf3b9c 132px,#d43996 138px,#d83890 144px,#dc368a 150px,#e03584 156px,#e4347f 162px,#e83279 168px,#e83278 169px)"></div>
<div style="left:43px;top:268px;width:163px;height:2px;background:linear-gradient(90deg,#3a6ec7 0px,#396dc7 6px,#396cc6 12px,#396cc6 18px,#3a6cc7 24px,#3a6cc7 30px,#3b6cc7 36px,#3e6bc7 42px,#406ac7 48px,#4369c7 54px,#4667c7 60px,#4c65c6 66px,#5463c4 72px,#5d60c2 78px,#665cc0 84px,#7459be 90px,#8356bd 96px,#9353bb 102px,#a04eb5 108px,#ae48af 114px,#ba43a8 120px,#c63ea2 126px,#ce3b9c 132px,#d33996 138px,#d73890 144px,#dc368a 150px,#e03584 156px,#e3337f 162px,#e4337e 163px)"></div>
<div style="left:44px;top:270px;width:158px;height:2px;background:linear-gradient(90deg,#396dc7 0px,#396dc6 6px,#396cc6 12px,#396bc6 18px,#396bc6 24px,#3a6bc7 30px,#3c6bc7 36px,#3e6ac7 42px,#4069c7 48px,#4368c6 54px,#4766c6 60px,#4e64c5 66px,#5661c3 72px,#5e5fc1 78px,#685bbf 84px,#7658be 90px,#8555bc 96px,#9452ba 102px,#a14db4 108px,#ae47ae 114px,#ba42a7 120px,#c63da1 126px,#ce3a9b 132px,#d23995 138px,#d7378f 144px,#db3689 150px,#df3584 156px,#e03482 158px)"></div>
<div style="left:45px;top:272px;width:153px;height:2px;background:linear-gradient(90deg,#396dc6 0px,#396cc6 6px,#396bc6 12px,#396ac5 18px,#396ac6 24px,#3a6ac6 30px,#3c6ac6 36px,#3e69c6 42px,#4168c6 48px,#4467c6 54px,#4765c5 60px,#4f63c4 66px,#5760c2 72px,#5f5dc0 78px,#6a5abe 84px,#7857bd 90px,#8754bb 96px,#9551b9 102px,#a24cb3 108px,#ae47ac 114px,#bb42a6 120px,#c63da0 126px,#cd3a9a 132px,#d23995 138px,#d6378f 144px,#da3689 150px,#dc3586 153px)"></div>
<div style="left:45px;top:274px;width:148px;height:2px;background:linear-gradient(90deg,#396dc6 0px,#396cc6 6px,#396bc5 12px,#386ac5 18px,#3969c5 24px,#3a69c5 30px,#3c69c6 36px,#3e68c6 42px,#4067c6 48px,#4366c5 54px,#4864c4 60px,#4f62c3 66px,#5760c1 72px,#5f5dc0 78px,#6a5abe 84px,#7857bc 90px,#8654bb 96px,#9351b9 102px,#a04cb3 108px,#ad47ac 114px,#b942a6 120px,#c43da1 126px,#cc3a9b 132px,#d13995 138px,#d5378f 144px,#d8368b 148px)"></div>
<div style="left:46px;top:276px;width:143px;height:2px;background:linear-gradient(90deg,#396cc6 0px,#396bc6 6px,#396ac5 12px,#3869c5 18px,#3969c5 24px,#3a68c5 30px,#3c68c5 36px,#3e67c5 42px,#4166c5 48px,#4365c5 54px,#4963c3 60px,#5061c2 66px,#585fc0 72px,#605cbf 78px,#6c59bd 84px,#7956bc 90px,#8753ba 96px,#9450b7 102px,#a14bb1 108px,#ad46ab 114px,#b941a6 120px,#c43da0 126px,#cc3a9a 132px,#d03994 138px,#d43790 143px)"></div>
<div style="left:47px;top:278px;width:138px;height:2px;background:linear-gradient(90deg,#396bc6 0px,#396bc5 6px,#386ac5 12px,#3868c4 18px,#3968c4 24px,#3a68c4 30px,#3c67c5 36px,#3e66c4 42px,#4165c4 48px,#4364c4 54px,#4a62c3 60px,#5260c1 66px,#595ec0 72px,#615bbe 78px,#6e58bd 84px,#7b55bb 90px,#8852ba 96px,#954fb6 102px,#a14ab0 108px,#ad45ab 114px,#b941a5 120px,#c43c9f 126px,#cb3a99 132px,#d03894 138px)"></div>
<div style="left:47px;top:280px;width:133px;height:2px;background:linear-gradient(90deg,#396bc6 0px,#396ac5 6px,#3869c5 12px,#3868c4 18px,#3867c4 24px,#3a67c4 30px,#3c66c4 36px,#3e66c4 42px,#4064c4 48px,#4463c3 54px,#4a61c2 60px,#525fc1 66px,#595dbf 72px,#615bbd 78px,#6d58bc 84px,#7a55bb 90px,#8752b9 96px,#944eb6 102px,#a04ab0 108px,#ac45ab 114px,#b741a5 120px,#c23c9f 126px,#ca3a9a 132px,#cb3999 133px)"></div>
<div style="left:48px;top:282px;width:128px;height:2px;background:linear-gradient(90deg,#396bc5 0px,#386ac5 6px,#3869c4 12px,#3868c4 18px,#3866c3 24px,#3a66c3 30px,#3c65c3 36px,#3e65c3 42px,#4064c3 48px,#4562c2 54px,#4c60c1 60px,#535ec0 66px,#5a5cbe 72px,#635abd 78px,#6f57bb 84px,#7c54ba 90px,#8851b9 96px,#944db5 102px,#a049af 108px,#ac44aa 114px,#b740a4 120px,#c23c9f 126px,#c63b9d 128px)"></div>
<div style="left:49px;top:284px;width:123px;height:2px;background:linear-gradient(90deg,#396ac5 0px,#3869c5 6px,#3868c4 12px,#3867c3 18px,#3966c3 24px,#3a65c3 30px,#3b65c3 36px,#3e64c3 42px,#4063c3 48px,#4661c1 54px,#4d5fc0 60px,#535ebf 66px,#5b5bbd 72px,#6459bc 78px,#7156bb 84px,#7d53ba 90px,#8950b8 96px,#954cb4 102px,#a148ae 108px,#ac44a9 114px,#b740a3 120px,#bd3da1 123px)"></div>
<div style="left:50px;top:286px;width:118px;height:2px;background:linear-gradient(90deg,#386ac5 0px,#3869c4 6px,#3868c4 12px,#3866c3 18px,#3965c3 24px,#3a64c2 30px,#3b64c2 36px,#3d63c2 42px,#4162c2 48px,#4760c1 54px,#4e5fbf 60px,#545dbe 66px,#5b5abc 72px,#6658bb 78px,#7255ba 84px,#7e52b9 90px,#8950b8 96px,#954cb2 102px,#a147ad 108px,#ac43a8 114px,#b440a4 118px)"></div>
<div style="left:51px;top:288px;width:112px;height:2px;background:linear-gradient(90deg,#3869c5 0px,#3868c4 6px,#3867c4 12px,#3966c3 18px,#3965c2 24px,#3963c2 30px,#3b63c2 36px,#3d62c2 42px,#4261c1 48px,#485fc0 54px,#4e5ebf 60px,#555cbd 66px,#5c5abc 72px,#6857bb 78px,#7354ba 84px,#7f52b8 90px,#8a4fb7 96px,#964bb1 102px,#a147ac 108px,#a944a9 112px)"></div>
<div style="left:51px;top:290px;width:108px;height:2px;background:linear-gradient(90deg,#3869c4 0px,#3868c4 6px,#3867c3 12px,#3966c3 18px,#3964c2 24px,#3963c2 30px,#3b62c1 36px,#3c61c1 42px,#4260c0 48px,#485fbf 54px,#4e5dbe 60px,#545bbd 66px,#5c59bb 72px,#6757ba 78px,#7254b9 84px,#7e51b8 90px,#894eb6 96px,#944ab1 102px,#a046ac 108px)"></div>
<div style="left:52px;top:292px;width:103px;height:2px;background:linear-gradient(90deg,#3868c4 0px,#3867c4 6px,#3866c3 12px,#3965c3 18px,#3964c2 24px,#3963c1 30px,#3a61c1 36px,#3d60c1 42px,#435fc0 48px,#495ebe 54px,#4f5cbd 60px,#555bbc 66px,#5d58bb 72px,#6856ba 78px,#7353b9 84px,#7e51b7 90px,#894eb5 96px,#954ab0 102px,#9749af 103px)"></div>
<div style="left:53px;top:294px;width:97px;height:2px;background:linear-gradient(90deg,#3868c4 0px,#3867c3 6px,#3966c3 12px,#3965c2 18px,#3963c2 24px,#3a62c1 30px,#3a61c0 36px,#3e60c0 42px,#435fbf 48px,#495dbe 54px,#4f5cbc 60px,#565abb 66px,#5f58ba 72px,#6955b9 78px,#7452b8 84px,#7f50b7 90px,#8a4db4 96px,#8c4cb3 97px)"></div>
<div style="left:54px;top:296px;width:92px;height:2px;background:linear-gradient(90deg,#3867c4 0px,#3866c3 6px,#3965c3 12px,#3964c2 18px,#3963c1 24px,#3a61c1 30px,#3a60c0 36px,#3f5fbf 42px,#445ebe 48px,#4a5cbd 54px,#505bbc 60px,#5659ba 66px,#6057b9 72px,#6b54b9 78px,#7552b8 84px,#7f4fb6 90px,#834eb6 92px)"></div>
<div style="left:55px;top:298px;width:87px;height:2px;background:linear-gradient(90deg,#3867c3 0px,#3966c3 6px,#3965c2 12px,#3964c2 18px,#3962c1 24px,#3a61c0 30px,#3b60c0 36px,#3f5ebe 42px,#455dbd 48px,#4a5cbc 54px,#505abb 60px,#5758ba 66px,#6156b9 72px,#6b53b8 78px,#7651b7 84px,#7b50b7 87px)"></div>
<div style="left:56px;top:300px;width:81px;height:2px;background:linear-gradient(90deg,#3866c3 0px,#3965c3 6px,#3964c2 12px,#3963c2 18px,#3a62c1 24px,#3a60c0 30px,#3c5fbf 36px,#405ebe 42px,#455cbc 48px,#4b5bbb 54px,#515aba 60px,#5858b9 66px,#6255b8 72px,#6c53b7 78px,#7151b7 81px)"></div>
<div style="left:57px;top:302px;width:76px;height:2px;background:linear-gradient(90deg,#3966c3 0px,#3965c2 6px,#3964c2 12px,#3963c1 18px,#3a61c1 24px,#3a60c0 30px,#3e5fbf 36px,#425dbd 42px,#465cbc 48px,#4b5abb 54px,#5159b9 60px,#5957b8 66px,#6354b8 72px,#6a53b7 76px)"></div>
<div style="left:58px;top:304px;width:71px;height:2px;background:linear-gradient(90deg,#3965c3 0px,#3964c2 6px,#3963c2 12px,#3962c1 18px,#3a61c0 24px,#3b60c0 30px,#3f5ebe 36px,#435dbd 42px,#475bbb 48px,#4c5aba 54px,#5158b8 60px,#5b56b8 66px,#6354b7 71px)"></div>
<div style="left:59px;top:306px;width:65px;height:2px;background:linear-gradient(90deg,#3965c2 0px,#3964c2 6px,#3963c1 12px,#3a62c1 18px,#3a60c0 24px,#3d5fbf 30px,#405ebe 36px,#445cbc 42px,#485bbb 48px,#4d59b9 54px,#5258b8 60px,#5a56b7 65px)"></div>
<div style="left:60px;top:308px;width:60px;height:2px;background:linear-gradient(90deg,#3964c2 0px,#3963c2 6px,#3962c1 12px,#3a61c1 18px,#3a60c0 24px,#3e5fbf 30px,#425dbd 36px,#465cbc 42px,#4a5aba 48px,#4e59b9 54px,#5457b8 60px)"></div>
<div style="left:62px;top:310px;width:54px;height:2px;background:linear-gradient(90deg,#3964c2 0px,#3963c1 6px,#3a62c1 12px,#3a60c0 18px,#3c5fbf 24px,#405ebe 30px,#435dbd 36px,#475bbb 42px,#4b5aba 48px,#5058b8 54px)"></div>
<div style="left:63px;top:312px;width:49px;height:2px;background:linear-gradient(90deg,#3963c2 0px,#3962c1 6px,#3a61c1 12px,#3a60c0 18px,#3d5fbf 24px,#415dbd 30px,#455cbc 36px,#495bbb 42px,#4d59b9 48px,#4d59b9 49px)"></div>
<div style="left:65px;top:314px;width:42px;height:2px;background:linear-gradient(90deg,#3963c1 0px,#3a62c1 6px,#3a61c0 12px,#3c5fbf 18px,#3f5ebe 24px,#435dbd 30px,#465bbb 36px,#4a5aba 42px)"></div>
<div style="left:66px;top:316px;width:37px;height:2px;background:linear-gradient(90deg,#3962c1 0px,#3a61c1 6px,#3a60c0 12px,#3d5fbf 18px,#405ebe 24px,#445cbc 30px,#485bbb 36px,#485bbb 37px)"></div>
<div style="left:68px;top:318px;width:31px;height:2px;background:linear-gradient(90deg,#3a62c1 0px,#3a61c0 6px,#3b60c0 12px,#3f5ebe 18px,#425dbd 24px,#465cbc 30px,#465cbc 31px)"></div>
<div style="left:71px;top:320px;width:23px;height:2px;background:linear-gradient(90deg,#3a61c1 0px,#3a60c0 6px,#3d5fbf 12px,#415ebe 18px,#445cbc 23px)"></div>
<div style="left:73px;top:322px;width:17px;height:2px;background:linear-gradient(90deg,#3a60c0 0px,#3c5fbf 6px,#3f5ebe 12px,#425dbd 17px)"></div>
<div style="left:75px;top:324px;width:11px;height:2px;background:linear-gradient(90deg,#3a60c0 0px,#3d5fbf 6px,#405ebe 11px)"></div>
<div style="left:76px;top:326px;width:8px;height:2px;background:linear-gradient(90deg,#3b5fbf 0px,#3f5ebe 6px,#405ebe 8px)"></div>
</div>
<svg width="344" height="344" viewBox="10 38 344 344">
<path d="M64.5 56.0V366.0M101.5 56.0V366.0M138.5 56.0V366.0M175.5 56.0V366.0M211.5 56.0V366.0M248.5 56.0V366.0M285.5 56.0V366.0M322.5 56.0V366.0M27.0 365.5H337.0M27.0 328.5H337.0M27.0 291.5H337.0M27.0 254.5H337.0M27.0 217.5H337.0M27.0 181.5H337.0M27.0 144.5H337.0M27.0 107.5H337.0M27.0 70.5H337.0" stroke="#ffffff" stroke-opacity="0.2" stroke-width="1" fill="none"/>
<path d="M10 248.8H354M29.5 38V382" stroke="#f0f0f0" stroke-width="1.3" fill="none"/>
<path d="M89.1 364.6L86.9 368.5M83.5 359.8L80.5 363.2M81.4 357.9L78.3 361.2M78.7 355.3L75.4 358.3M75.5 351.4L71.9 354.0M71.3 344.7L67.3 346.9M65.9 333.9L61.7 335.7M59.1 316.9L54.8 318.4M50.7 291.7L46.4 292.9M42.1 256.8L37.7 257.7M34.0 213.3L29.5 213.9M28.3 166.7L23.8 167.1M26.7 123.6L22.2 123.5M30.5 88.2L26.1 87.2M39.9 65.0L36.2 62.3M53.6 56.5L52.7 52.1M68.8 59.4L70.3 55.1M83.9 67.0L86.1 63.0M98.1 76.0L100.7 72.3M111.7 86.1L114.5 82.6M125.1 97.2L128.0 93.8M138.4 109.1L141.4 105.7M151.6 121.4L154.7 118.1M164.8 134.1L167.9 130.9M177.9 147.0L181.1 143.8M191.0 159.9L194.2 156.7M203.8 172.7L207.0 169.5M216.3 185.1L219.5 181.9M228.2 197.0L231.4 193.8M239.4 208.1L242.6 205.0M249.7 218.4L252.8 215.2M258.6 227.3L261.7 224.1M266.4 235.0L269.6 231.9M272.9 241.5L276.1 238.3M278.2 246.8L281.4 243.6M282.4 251.0L285.6 247.8M285.7 254.3L288.9 251.1M288.4 257.0L291.6 253.8M297.9 266.4L301.0 263.2M298.1 266.6L301.3 263.4" stroke="#c4c4c4" stroke-width="0.9" fill="none"/>
<path d="M124 268 C132 257 138 247 146 239 C165 221 190 210 214 212 C224 213 230 214 235 216.5" stroke="#111" stroke-width="1" fill="none"/>
<path d="M124.7 113.3L275.3 246.5M124.7 113.3L83 340.9" stroke="#0b5a24" stroke-width="1" fill="none"/>
<path d="M83 340.9L275.3 246.5" stroke="#101820" stroke-width="1" fill="none"/>
<path d="M90.5 93.5L281.5 253.8L73.3 335.6Z" stroke="#fffbf0" stroke-width="2.4" fill="none" stroke-linejoin="miter"/>
<path d="M122.7 111.3L126.7 115.3M126.7 111.3L122.7 115.3M124.7 110.7V115.9" stroke="#d04a2a" stroke-width="1.2"/>
<path d="M273.5 244.7L277.1 248.3M277.1 244.7L273.5 248.3" stroke="#50c050" stroke-width="1.1"/>
<path d="M81.2 339.1L84.8 342.7M84.8 339.1L81.2 342.7" stroke="#48b068" stroke-width="1.1"/>
<circle cx="142.3" cy="242" r="2.4" stroke="#555" stroke-width="1" fill="none"/>
<g font-family="Liberation Sans" font-size="9.6" letter-spacing="-0.45" fill="#dcdcdc" text-anchor="middle" dominant-baseline="central">
<text x="52.9" y="45.0">520</text>
<text x="96.0" y="56.5">530</text>
<text x="124.0" y="76.2">540</text>
<text x="151.3" y="99.4">550</text>
<text x="177.9" y="124.2">560</text>
<text x="203.4" y="149.6">570</text>
<text x="228.9" y="174.2">580</text>
<text x="253.4" y="197.7">590</text>
<text x="270.5" y="216.0">600</text>
<text x="285.4" y="230.3">610</text>
<text x="294.9" y="240.0">620</text>
<text x="301.0" y="246.2">630</text>
<text x="310.4" y="255.3">680</text>
<text x="15.4" y="87.8">510</text>
<text x="28.3" y="258.6">490</text>
<text x="44.7" y="318.4">480</text>
<text x="57.1" y="353.5">470</text>
<text x="65.0" y="364.8">460</text>
<text x="69.7" y="370.3">450</text>
<text x="76.7" y="375.3">420</text>
<text x="17.0" y="362.3">0.0</text>
<text x="17.0" y="328.6">0.1</text>
<text x="17.0" y="291.8">0.2</text>
<text x="17.0" y="255.0">0.3</text>
<text x="17.0" y="218.2">0.4</text>
<text x="17.0" y="181.5">0.5</text>
<text x="17.0" y="144.7">0.6</text>
<text x="17.0" y="107.9">0.7</text>
<text x="17.0" y="71.1">0.8</text>
<text x="25.9" y="371.6">0.0</text>
<text x="62.6" y="371.6">0.1</text>
<text x="99.4" y="371.6">0.2</text>
<text x="136.2" y="371.6">0.3</text>
<text x="173.0" y="371.6">0.4</text>
<text x="209.8" y="371.6">0.5</text>
<text x="246.6" y="371.6">0.6</text>
<text x="283.4" y="371.6">0.7</text>
<text x="320.2" y="371.6">0.8</text>
<text x="341.5" y="371.5">X</text><text x="14.6" y="56.5">Y</text>
</g>
<text x="39.3" y="267.3" font-family="Liberation Mono" font-size="12" letter-spacing="-0.9" fill="#dce6f0">X:0.002,Y:0.315</text>
<text x="133.6" y="253" font-family="Liberation Mono" font-size="11.5" letter-spacing="-1.1" fill="#141414">W 6504K</text>
</svg>
</div>

<!-- right panel -->
<div class="a hdr" style="left:378.6px;top:55.7px">Screen</div>
<div class="hline" style="left:413px;top:60px;width:330px"></div>
<div class="a lbl" style="left:390.6px;top:86.3px">COM Port:</div>
<div class="sel" style="left:486px;top:84px;width:153px;height:19px"><span>USB@Port_#0001.Hub_#0003</span><div style="position:absolute;right:0;top:0;width:19px;height:17px;background:#e3e3e3"></div><svg class="chev" style="right:4px;top:6.5px" viewBox="0 0 10 6"><path d="M1.5 1.2L5 4.6L8.5 1.2" fill="none" stroke="#5a5a5a" stroke-width="1"/></svg></div>
<div class="a lbl" style="left:391px;top:132.3px">Screen:</div>
<div class="sel" style="left:486px;top:129px;width:153px;height:19px"><span>Screen 1</span><svg class="chev" style="right:4px;top:6.5px" viewBox="0 0 10 6"><path d="M1.5 1.2L5 4.6L8.5 1.2" fill="none" stroke="#5a5a5a" stroke-width="1"/></svg></div>

<div class="a hdr" style="left:378.8px;top:178.9px">Image Booster Switch</div>
<div class="hline" style="left:475px;top:183px;width:268px"></div>

<div class="grp" style="left:389px;top:205px;width:283px;height:80.5px"></div>
<div class="a" style="left:394.5px;top:199.1px;padding:0 2px 0 1.5px;background:#272b34;font-size:10.5px;line-height:12px;letter-spacing:-0.6px;color:#e8e8e8">Color Management</div>
<div class="a lbl" style="left:394px;top:224.4px">Color Gamut</div>
<div class="sel" style="left:467px;top:221px;width:120px;height:19px"><span>DCI-P3</span><svg class="chev" style="right:4px;top:6.5px" viewBox="0 0 10 6"><path d="M1.5 1.2L5 4.6L8.5 1.2" fill="none" stroke="#5a5a5a" stroke-width="1"/></svg></div>
<div class="a lbl" style="left:395px;top:260.0px">Color Te...</div>
<div class="a" style="left:445px;top:255px;width:163px;height:17px;background:#e8e8e8;border:1px solid #d8d8d8"></div>
<div class="a" style="left:503px;top:256px;width:14px;height:15px;background:#c9c9c9"></div>
<svg class="a" style="left:448px;top:259px" width="8" height="9" viewBox="0 0 8 9"><path d="M5.5 1.8L2.5 4.5L5.5 7.2" fill="none" stroke="#3a3a3a" stroke-width="1.5"/></svg>
<svg class="a" style="left:596px;top:259px" width="8" height="9" viewBox="0 0 8 9"><path d="M2.5 1.8L5.5 4.5L2.5 7.2" fill="none" stroke="#3a3a3a" stroke-width="1.5"/></svg>
<div class="a" style="left:610px;top:253.5px;width:47px;height:18px;background:#fff;border:1px solid #c8c8c8"></div>
<div class="a" style="left:612px;top:256px;font-size:10.2px;line-height:12px;letter-spacing:-0.35px;color:#2a2a2a">6504</div>
<div class="a" style="left:643px;top:255.5px;width:12px;height:14px;background:#f0f0f0;border:1px solid #c4c4c4"></div>
<svg class="a" style="left:644px;top:256px" width="10" height="14" viewBox="0 0 10 14"><path d="M2.5 5L5 2.5L7.5 5" fill="#444" stroke="#444" stroke-width="0.8"/><path d="M2.5 9L5 11.5L7.5 9" fill="#444" stroke="#444" stroke-width="0.8"/><path d="M0 7H10" stroke="#aaa" stroke-width="0.8"/></svg>
<div class="a lbl" style="left:663.5px;top:255.5px">K</div>

<div class="a lbl" style="left:392.8px;top:295.9px">Precise Gray...</div>
<div class="tog" style="left:472.5px;top:292.5px"><i></i></div>
<div class="a lbl" style="left:394px;top:333.7px">22bit+:</div>
<div class="tog" style="left:472.5px;top:328.5px"><i></i></div>
<div class="a lbl" style="left:392.7px;top:363.4px">Display Mode</div>
<div class="sel" style="left:467px;top:359px;width:120px;height:19px"><span>Standard</span><svg class="chev" style="right:4px;top:6.5px" viewBox="0 0 10 6"><path d="M1.5 1.2L5 4.6L8.5 1.2" fill="none" stroke="#5a5a5a" stroke-width="1"/></svg></div>

<div class="a hdr" style="left:384px;top:441.1px">Screen Calibration</div>
<div class="hline" style="left:464px;top:445px;width:280px"></div>
<div class="a" style="left:494px;top:461px;width:78px;height:30px;border:2px solid #d6d6d6;border-radius:2px;background:linear-gradient(180deg,#9ca0a6 0%,#8d9197 35%,#4e5259 50%,#5d6168 75%,#7a7e84 100%)"></div>
<div class="a" style="left:494px;top:469px;width:78px;text-align:center;font-size:10.5px;line-height:12px;letter-spacing:-0.65px;color:#111">Calibrate</div>

<!-- table -->
<div class="a" style="left:12px;top:428px;width:358px;height:81px;border:1.5px solid #dcdcdc;background:#262a33"></div>
<div class="a" style="left:12px;top:466px;width:358px;height:1px;background:#d8d8d8"></div>
<div class="a" style="left:99px;top:428px;width:1px;height:81px;background:#d8d8d8"></div>
<div class="a" style="left:183px;top:428px;width:1.5px;height:81px;background:#d8d8d8"></div>
<div class="a lbl" style="left:14.8px;top:439.7px">Gamut Cove...</div>
<div class="a lbl" style="left:103.5px;top:439.7px">Co...</div>
<div class="a lbl" style="left:188.8px;top:439.7px">Whitepoi...</div>
<div class="a lbl" style="left:15.3px;top:479.6px">94.28%</div>
<div class="a lbl" style="left:103.5px;top:479.6px">6504</div>
<div class="a lbl" style="left:188.8px;top:479.6px">(0.3127,0.329)</div>
</body></html>
